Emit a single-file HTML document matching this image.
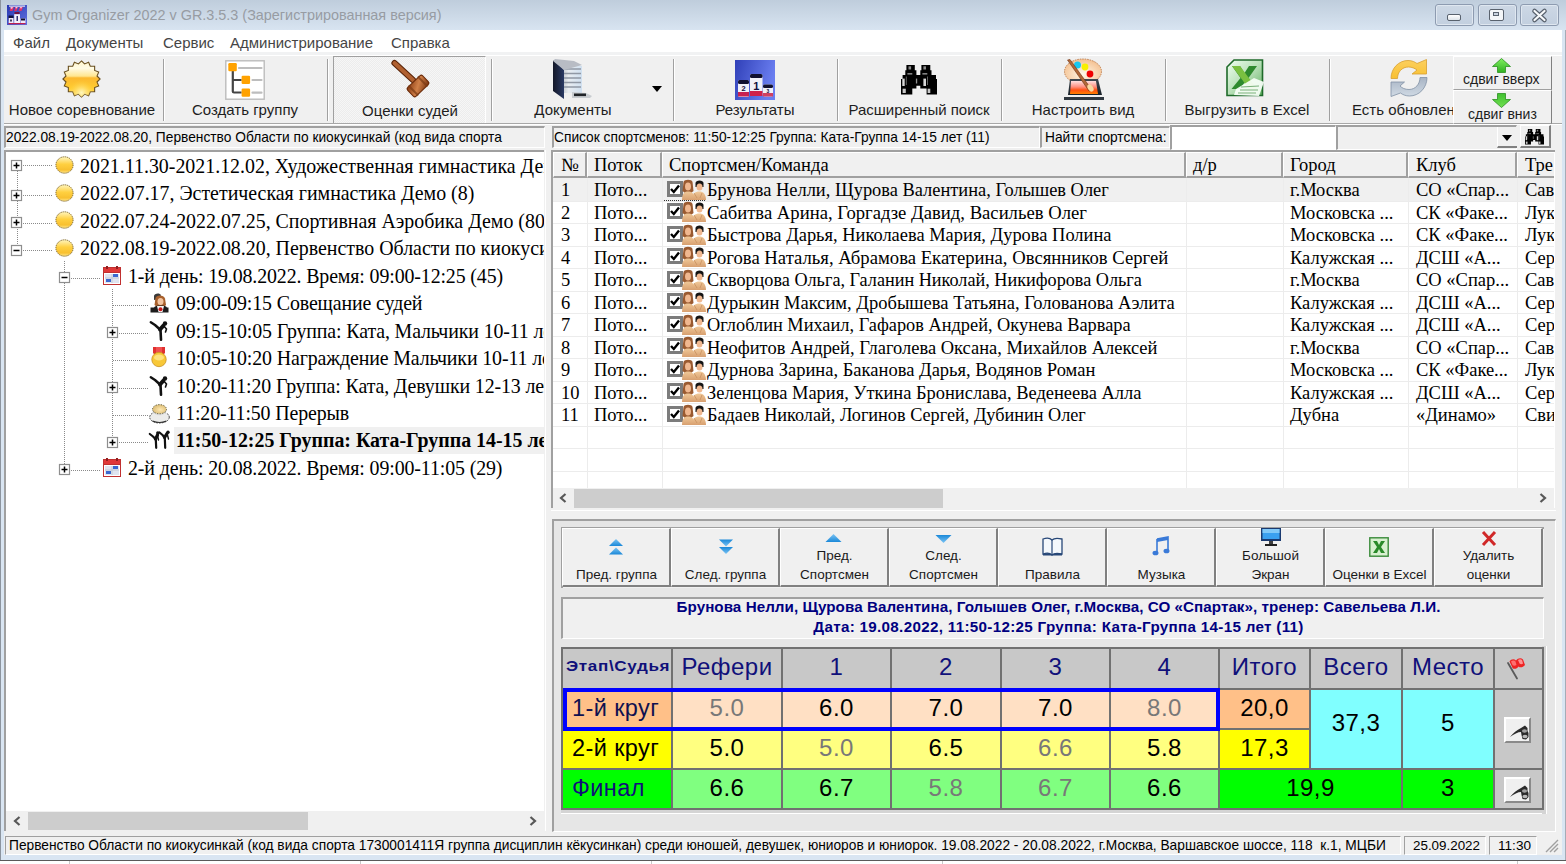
<!DOCTYPE html><html><head><meta charset="utf-8"><style>
html,body{margin:0;padding:0;}
body{width:1566px;height:864px;overflow:hidden;position:relative;background:#fbfbfb;font-family:"Liberation Sans",sans-serif;}
div{position:absolute;box-sizing:border-box;}
.t{white-space:pre;line-height:1;}
svg{position:absolute;overflow:visible;}

</style></head><body>
<div style="left:0px;top:860px;width:1566px;height:4px;background:#ffffff;"></div>
<div style="left:0px;top:860px;width:1566px;height:1px;background:#5a5a5a;"></div>
<div style="left:69px;top:861px;width:1px;height:3px;background:#c8c8c8;"></div>
<div style="left:360px;top:861px;width:1px;height:3px;background:#c8c8c8;"></div>
<div style="left:651px;top:861px;width:1px;height:3px;background:#c8c8c8;"></div>
<div style="left:942px;top:861px;width:1px;height:3px;background:#c8c8c8;"></div>
<div style="left:1517px;top:861px;width:1px;height:3px;background:#c8c8c8;"></div>
<div style="left:0px;top:0px;width:1566px;height:860px;background:#d9e5f2;"></div>
<div style="left:0px;top:0px;width:1px;height:860px;background:#8c949e;"></div>
<div style="left:1565px;top:0px;width:1px;height:860px;background:#a4acb6;"></div>
<div style="left:1px;top:0px;width:1565px;height:30px;background:linear-gradient(#bfcddc,#d8e4f1);"></div>
<svg style="left:6.5px;top:4.7px" width="20" height="20" viewBox="0 0 20 20">
<defs><linearGradient id="aig" x1="0" y1="0" x2="1" y2="1"><stop offset="0" stop-color="#2838b0"/><stop offset="1" stop-color="#6070e0"/></linearGradient></defs>
<rect x="0" y="0" width="20" height="20" fill="url(#aig)"/>
<rect x="2" y="0.5" width="16" height="1.2" fill="#e8e8f8"/>
<path d="M2.5 6 L4 2 H7 L5.5 6 Z M7 6 L8.5 2 H11 L9.5 6 Z M11.5 6 L13 2 H16 L14.5 6 Z" fill="#e0306a"/>
<path d="M3 3 L4 2 H6 L5 4 Z M8 3 L9 2 H10.5 L10 3.5 Z M12.5 3 L13.5 2 H15 L14.5 3.5 Z" fill="#ffc0d8"/>
<rect x="7.5" y="7" width="5" height="2.2" fill="#701040"/>
<rect x="1.5" y="10.5" width="5" height="5" fill="#141440"/>
<rect x="1.7" y="13" width="4.8" height="5" fill="#f0e8f8"/>
<rect x="7.2" y="9.2" width="5.8" height="8.8" fill="#f4f0fa"/>
<rect x="13.5" y="13.5" width="5" height="4.5" fill="#f0e8f8"/><rect x="14" y="13.5" width="4" height="2" fill="#101030"/>
<rect x="9.5" y="11" width="1.5" height="5" fill="#303070"/><rect x="3" y="14.5" width="2" height="2" fill="#404060"/>
<rect x="1.5" y="18" width="17" height="1.2" fill="#c02050"/>
</svg>
<div class="t" style="left:32px;top:8px;font-size:14.4px;color:#979ca3;">Gym Organizer 2022 v GR.3.5.3 (Зарегистрированная версия)</div>
<div style="left:1435px;top:4px;width:39px;height:22px;border:1px solid #8d9bb0;border-radius:3px;background:linear-gradient(#cdd8e5,#c2cfdf);box-shadow:inset 0 0 0 1px #dfe7f0;"><div style="left:11px;top:8.5px;width:14px;height:7px;border:1.5px solid #59626e;border-radius:2px;background:linear-gradient(#ffffff,#dfe4ea);"></div></div>
<div style="left:1478px;top:4px;width:39px;height:22px;border:1px solid #8d9bb0;border-radius:3px;background:linear-gradient(#cdd8e5,#c2cfdf);box-shadow:inset 0 0 0 1px #dfe7f0;"><div style="left:10px;top:3.5px;width:14.5px;height:12px;border:1.5px solid #59626e;border-radius:2px;background:#f4f6f8;"><div style="left:2.5px;top:2.5px;width:6.5px;height:4px;border:1px solid #59626e;background:#c9d3df"></div></div></div>
<div style="left:1520px;top:4px;width:39px;height:22px;border:1px solid #8d9bb0;border-radius:3px;background:linear-gradient(#cdd8e5,#c2cfdf);box-shadow:inset 0 0 0 1px #dfe7f0;"><svg style="left:11px;top:3.5px" width="15" height="13" viewBox="0 0 15 13"><path d="M2.5 2 L12.5 11 M12.5 2 L2.5 11" stroke="#59626e" stroke-width="4.6" stroke-linecap="round"/><path d="M2.5 2 L12.5 11 M12.5 2 L2.5 11" stroke="#f6f8fa" stroke-width="2.2" stroke-linecap="round"/></svg></div>
<div style="left:4px;top:30px;width:1558px;height:825px;background:#f0f0f0;"></div>
<div style="left:4px;top:30px;width:1558px;height:22px;background:#ffffff;"></div>
<div style="left:4px;top:52px;width:1558px;height:3px;background:#f1f2f3;"></div>
<div style="left:4px;top:55px;width:1558px;height:1px;background:#ffffff;"></div>
<div class="t" style="left:13px;top:35px;font-size:15px;color:#454545;">Файл</div>
<div class="t" style="left:66px;top:35px;font-size:15px;color:#454545;">Документы</div>
<div class="t" style="left:163px;top:35px;font-size:15px;color:#454545;">Сервис</div>
<div class="t" style="left:230px;top:35px;font-size:15px;color:#454545;">Администрирование</div>
<div class="t" style="left:391px;top:35px;font-size:15px;color:#454545;">Справка</div>
<div style="left:4px;top:56px;width:1558px;height:68px;background:#f0f0f0;"></div>
<div style="left:4px;top:123px;width:1558px;height:1px;background:#a8a8a8;"></div>
<div style="left:4px;top:124px;width:1558px;height:1px;background:#ffffff;"></div>
<div style="left:163px;top:59px;width:1px;height:62px;background:#a0a0a0;"></div>
<div style="left:164px;top:59px;width:1px;height:62px;background:#ffffff;"></div>
<div style="left:327px;top:59px;width:1px;height:62px;background:#a0a0a0;"></div>
<div style="left:328px;top:59px;width:1px;height:62px;background:#ffffff;"></div>
<div style="left:491px;top:59px;width:1px;height:62px;background:#a0a0a0;"></div>
<div style="left:492px;top:59px;width:1px;height:62px;background:#ffffff;"></div>
<div style="left:673px;top:59px;width:1px;height:62px;background:#a0a0a0;"></div>
<div style="left:674px;top:59px;width:1px;height:62px;background:#ffffff;"></div>
<div style="left:837px;top:59px;width:1px;height:62px;background:#a0a0a0;"></div>
<div style="left:838px;top:59px;width:1px;height:62px;background:#ffffff;"></div>
<div style="left:1001px;top:59px;width:1px;height:62px;background:#a0a0a0;"></div>
<div style="left:1002px;top:59px;width:1px;height:62px;background:#ffffff;"></div>
<div style="left:1165px;top:59px;width:1px;height:62px;background:#a0a0a0;"></div>
<div style="left:1166px;top:59px;width:1px;height:62px;background:#ffffff;"></div>
<div style="left:1329px;top:59px;width:1px;height:62px;background:#a0a0a0;"></div>
<div style="left:1330px;top:59px;width:1px;height:62px;background:#ffffff;"></div>
<div style="left:333px;top:56px;width:153px;height:67px;border-top:1px solid #a0a0a0;border-left:1px solid #a0a0a0;border-right:1px solid #ffffff;background:#f2f2f2;background-image:repeating-conic-gradient(#f6f6f6 0 25%,#ececec 0 50%);background-size:2px 2px;"></div>
<div class="t" style="left:-68px;top:101.5px;width:300px;text-align:center;font-size:15px;color:#1e1e1e;">Новое соревнование</div>
<div class="t" style="left:95px;top:101.5px;width:300px;text-align:center;font-size:15px;color:#1e1e1e;">Создать группу</div>
<div class="t" style="left:260px;top:102.5px;width:300px;text-align:center;font-size:15px;color:#1e1e1e;">Оценки судей</div>
<div class="t" style="left:423px;top:101.5px;width:300px;text-align:center;font-size:15px;color:#1e1e1e;">Документы</div>
<div class="t" style="left:605px;top:101.5px;width:300px;text-align:center;font-size:15px;color:#1e1e1e;">Результаты</div>
<div class="t" style="left:769px;top:101.5px;width:300px;text-align:center;font-size:15px;color:#1e1e1e;">Расширенный поиск</div>
<div class="t" style="left:933px;top:101.5px;width:300px;text-align:center;font-size:15px;color:#1e1e1e;">Настроить вид</div>
<div class="t" style="left:1097px;top:101.5px;width:300px;text-align:center;font-size:15px;color:#1e1e1e;">Выгрузить в Excel</div>
<div class="t" style="left:1352px;top:101.5px;width:101px;overflow:hidden;font-size:15px;color:#1e1e1e;">Есть обновления</div>
<svg style="left:62px;top:60px" width="39" height="38" viewBox="0 0 39 38">
<defs><linearGradient id="sunA" x1="0" y1="0" x2="0" y2="1"><stop offset="0" stop-color="#fff4c8"/><stop offset="0.2" stop-color="#fffbe6"/><stop offset="0.42" stop-color="#ffe690"/><stop offset="0.47" stop-color="#fbb830"/><stop offset="0.75" stop-color="#ffcc30"/><stop offset="1" stop-color="#ffe070"/></linearGradient>
<radialGradient id="sunB" cx="50%" cy="88%" r="35%"><stop offset="0" stop-color="#fff8c0" stop-opacity="1"/><stop offset="1" stop-color="#ffd040" stop-opacity="0"/></radialGradient></defs>
<polygon points="19.50,0.96 22.58,3.97 26.62,2.33 28.28,6.26 32.65,6.24 32.64,10.49 36.68,12.10 35.00,16.01 38.10,19.00 35.00,21.99 36.68,25.90 32.64,27.51 32.65,31.76 28.28,31.74 26.62,35.67 22.58,34.03 19.50,37.04 16.42,34.03 12.38,35.67 10.72,31.74 6.35,31.76 6.36,27.51 2.32,25.90 4.00,21.99 0.90,19.00 4.00,16.01 2.32,12.10 6.36,10.49 6.35,6.24 10.72,6.26 12.38,2.33 16.42,3.97" fill="url(#sunA)" stroke="#6a5020" stroke-width="1.1" stroke-linejoin="miter"/>
<polygon points="19.50,0.96 22.58,3.97 26.62,2.33 28.28,6.26 32.65,6.24 32.64,10.49 36.68,12.10 35.00,16.01 38.10,19.00 35.00,21.99 36.68,25.90 32.64,27.51 32.65,31.76 28.28,31.74 26.62,35.67 22.58,34.03 19.50,37.04 16.42,34.03 12.38,35.67 10.72,31.74 6.35,31.76 6.36,27.51 2.32,25.90 4.00,21.99 0.90,19.00 4.00,16.01 2.32,12.10 6.36,10.49 6.35,6.24 10.72,6.26 12.38,2.33 16.42,3.97" fill="url(#sunB)"/>
</svg>
<svg style="left:225px;top:60px" width="40" height="40" viewBox="0 0 40 40">
<rect x="0.8" y="0.8" width="38.4" height="38.4" fill="#ffffff" stroke="#bcbcbc" stroke-width="1.4"/>
<path d="M7.8 11 V31.5 Q7.8 32.5 9 32.5 H16.6 M7.8 20 H16.6" stroke="#444" stroke-width="2.2" fill="none"/>
<rect x="3.3" y="3" width="8.5" height="8.2" rx="1.2" fill="#ffa200"/>
<rect x="16.6" y="15.7" width="8.5" height="8.3" rx="1.2" fill="#ffa200"/>
<rect x="16.6" y="28.5" width="8.5" height="8.2" rx="1.2" fill="#ffa200"/>
<path d="M14 8 H36.5 M27.5 20 H36.5 M27.5 32.7 H36.5" stroke="#bdbdbd" stroke-width="2.2" stroke-linecap="round"/>
</svg>
<svg style="left:380px;top:56px" width="60" height="46" viewBox="0 0 60 46">
<defs><linearGradient id="hmA" x1="0" y1="0" x2="1" y2="1"><stop offset="0" stop-color="#8a3c14"/><stop offset="0.5" stop-color="#d08048"/><stop offset="1" stop-color="#7a3410"/></linearGradient></defs>
<path d="M14.5 7 L33 24" stroke="#5a2408" stroke-width="6.2" stroke-linecap="round"/>
<path d="M14.5 7 L33 24" stroke="#b06030" stroke-width="4" stroke-linecap="round"/>
<g transform="translate(38,30) rotate(-44)">
<rect x="-11" y="-6.6" width="22" height="13.2" rx="2.6" fill="#6a2a08"/>
<rect x="-10" y="-5.6" width="20" height="11.2" rx="2" fill="url(#hmA)"/>
<rect x="-7.5" y="-7" width="2" height="14" fill="#7a3a14" opacity="0.7"/>
<rect x="5.5" y="-7" width="2" height="14" fill="#7a3a14" opacity="0.7"/>
</g>
</svg>
<svg style="left:550px;top:58px" width="46" height="44" viewBox="0 0 46 44">
<defs><linearGradient id="dcA" x1="0" y1="0" x2="1" y2="0"><stop offset="0" stop-color="#141828"/><stop offset="1" stop-color="#2a3a64"/></linearGradient>
<linearGradient id="dcB" x1="0" y1="0" x2="1" y2="0"><stop offset="0" stop-color="#9aa0a8"/><stop offset="0.5" stop-color="#e8ecf0"/><stop offset="1" stop-color="#d0e0f0"/></linearGradient></defs>
<path d="M5 4 L14 5 L32 8 L32 35 L14 35 Z" fill="url(#dcB)"/>
<path d="M14 11 H31 M14 15.5 H31 M14 20 H31 M14 24.5 H31 M14 29 H31" stroke="#9098a4" stroke-width="1.4"/>
<path d="M3 3 L5 2 L14 12 L14 41 L3 33 Z" fill="url(#dcA)"/>
<path d="M3 3 L5 1 L24 3 L32 7 L14 12 Z" fill="#b8bcc4"/>
<path d="M22 34 L36 35 L42 38 L40 40 L22 40 Z" fill="#c8ccd0"/>
<rect x="24" y="35.5" width="12" height="2.6" fill="#202428"/>
</svg>
<svg style="left:652px;top:86px" width="10" height="6" viewBox="0 0 10 6"><path d="M0 0 H10 L5 6 Z" fill="#000"/></svg>
<svg style="left:735px;top:60px" width="40" height="40" viewBox="0 0 40 40">
<defs><linearGradient id="pg" x1="0" y1="0" x2="1" y2="0.3"><stop offset="0" stop-color="#3040b8"/><stop offset="1" stop-color="#6a7ef0"/></linearGradient></defs>
<rect width="40" height="40" fill="url(#pg)"/>
<rect x="15" y="14" width="12.5" height="22" rx="1.5" fill="#f0f0f8"/><rect x="15" y="14" width="12.5" height="4" rx="1.5" fill="#101030"/>
<rect x="15" y="31" width="12.5" height="5" fill="#d02048"/>
<rect x="3" y="20" width="11" height="17" rx="1.5" fill="#f0f0f8"/><rect x="3" y="20" width="11" height="4" rx="1.5" fill="#101030"/>
<rect x="3" y="32" width="11" height="4.5" fill="#c82050"/>
<rect x="28" y="24.5" width="10" height="12" rx="1.5" fill="#f0f0f8"/><rect x="28" y="24.5" width="10" height="3.5" rx="1.5" fill="#101030"/>
<rect x="28" y="33" width="10" height="3.5" fill="#d04060"/>
<text x="21.2" y="30" text-anchor="middle" font-size="11" font-weight="bold" fill="#101040" font-family="Liberation Sans">1</text>
<text x="8.5" y="31" text-anchor="middle" font-size="7.5" font-weight="bold" fill="#101040" font-family="Liberation Sans">2</text>
<text x="33" y="32.5" text-anchor="middle" font-size="5" font-weight="bold" fill="#101040" font-family="Liberation Sans">3</text>
</svg>
<svg style="left:900.6px;top:64.8px" width="36" height="30" viewBox="0 0 36 30"><path d="M5.4 0 H13.8 V5.3 H15.4 V10 H19.3 V5.3 H20.4 V0 H29.3 V5.3 H30.5 V10 H35 V14 H36 V29.4 H25.6 V23.4 H19.3 V20.7 H15.4 V23.4 H11.3 V29.4 H0 V14 H1.6 V10 H4.3 V5.3 H5.4 Z" fill="#000"/>
<rect x="7.5" y="1.3" width="2.6" height="3.2" fill="#8a8a8a"/><rect x="22.4" y="1.3" width="2.6" height="3.2" fill="#8a8a8a"/>
<rect x="6.4" y="8.2" width="4.9" height="1.3" fill="#a0a0a0"/><rect x="21.4" y="8.2" width="4.9" height="1.3" fill="#a0a0a0"/>
<rect x="1.3" y="13.6" width="2.4" height="7.4" fill="#d8d8d8"/><rect x="1.6" y="23.7" width="3.2" height="4.3" fill="#c8c8c8"/>
<rect x="14.9" y="13.6" width="1.3" height="4.9" fill="#909090"/>
<rect x="22.4" y="13.6" width="2.6" height="7.4" fill="#d8d8d8"/><rect x="26.6" y="23.7" width="2.7" height="4.3" fill="#c8c8c8"/>
<rect x="4.8" y="11.5" width="1" height="8.5" fill="#606060"/><rect x="26" y="11.5" width="1" height="8.5" fill="#606060"/></svg>
<svg style="left:1062px;top:58px" width="42" height="43" viewBox="0 0 42 43">
<defs><radialGradient id="plA" cx="50%" cy="60%" r="60%"><stop offset="0" stop-color="#fff8e8"/><stop offset="1" stop-color="#f4c090"/></radialGradient>
<linearGradient id="plB" x1="0" y1="0" x2="0" y2="1"><stop offset="0" stop-color="#ffe0e0"/><stop offset="0.45" stop-color="#ff9080"/><stop offset="0.7" stop-color="#ff5010"/><stop offset="1" stop-color="#ff8000"/></linearGradient>
<linearGradient id="plC" x1="0" y1="0" x2="0" y2="1"><stop offset="0" stop-color="#404850"/><stop offset="1" stop-color="#182028"/></linearGradient></defs>
<ellipse cx="21" cy="13.5" rx="18.5" ry="12.5" fill="url(#plA)" stroke="#c08050" stroke-width="1" stroke-dasharray="1.5 1"/>
<circle cx="15.5" cy="7" r="3.5" fill="#18c8f0"/><circle cx="23" cy="9" r="3.4" fill="#f8f000"/><circle cx="28" cy="16" r="3.4" fill="#f00000"/>
<path d="M6 37 L8 21 L36 21 L40 37 Z" fill="url(#plC)"/>
<path d="M9 23 L34 23 L36 36 L8 36 Z" fill="url(#plB)"/>
<rect x="2" y="39" width="40" height="3" fill="#303840"/>
<path d="M5.5 2 L8 1.5 L30 32 L27 33 Z" fill="#b06838" stroke="#703010" stroke-width="0.6"/>
<ellipse cx="28.5" cy="30" rx="2.5" ry="4" transform="rotate(-35 28.5 30)" fill="#f8d8a0"/>
</svg>
<svg style="left:1226px;top:59px" width="38" height="38" viewBox="0 0 38 38">
<defs><linearGradient id="xg" x1="0" y1="0" x2="1" y2="1"><stop offset="0" stop-color="#f0fff0"/><stop offset="0.5" stop-color="#b8e0b8"/><stop offset="1" stop-color="#60b060"/></linearGradient></defs>
<path d="M8 1 H36.5 V36.5 H1 V8 Z" fill="url(#xg)" stroke="#1e6a2a" stroke-width="1.6"/>
<path d="M6 7 H14 L18.5 14 L23 7 H31 L22.5 19 L31 30 H23 L18.5 23.5 L14 30 H5.5 L14.5 19 Z" fill="#2e8a2e"/>
<path d="M6 7 H14 L31 30 H23 Z" fill="#7ac040"/>
<path d="M10 30 L28 19 L38 23 L33 37 L8 36 Z" fill="#f8fff8" opacity="0.92"/>
<path d="M15 28 L33 27 M14 31 L32 31 M12 34 L30 34" stroke="#7ab07a" stroke-width="1.2"/>
</svg>
<svg style="left:1390px;top:59px" width="38" height="38" viewBox="0 0 38 38">
<defs><linearGradient id="rfA" x1="0" y1="0" x2="0" y2="1"><stop offset="0" stop-color="#fcd060"/><stop offset="1" stop-color="#f8c030"/></linearGradient>
<linearGradient id="rfB" x1="0" y1="0" x2="0" y2="1"><stop offset="0" stop-color="#a8b4c4"/><stop offset="1" stop-color="#d0dae4"/></linearGradient></defs>
<path d="M1 19.5 C1 9 9 1.5 18 1.5 C22 1.5 25 3 27 4.5 L36.5 0.5 V15 H22 L27 11 C25 9.5 22 8 18.5 8 C12 8 7.5 13 7.5 19.5 Z" fill="url(#rfA)" stroke="#d8a030" stroke-width="0.8"/>
<path d="M37 18.5 C37 29 29 37 19.5 37 C15.5 37 12.5 35.5 10.5 34 L1 37.5 V23 H14.5 L10 27 C12 29 15 30.5 19 30.5 C25.5 30.5 30 25 30 18.5 Z" fill="url(#rfB)" stroke="#8090a4" stroke-width="0.8"/>
</svg>
<div style="left:1453px;top:56px;width:99px;height:34px;border-top:1px solid #ffffff;border-left:1px solid #ffffff;border-right:1px solid #808080;border-bottom:1px solid #a0a0a0;background:#f0f0f0;"></div>
<div style="left:1453px;top:90px;width:99px;height:34px;border-top:1px solid #ffffff;border-left:1px solid #ffffff;border-right:1px solid #808080;border-bottom:1px solid #a0a0a0;background:#f0f0f0;"></div>
<svg style="left:1492px;top:58px" width="19" height="15" viewBox="0 0 19 15"><defs><linearGradient id="gar" x1="0" y1="0" x2="0" y2="1"><stop offset="0" stop-color="#80f060"/><stop offset="1" stop-color="#30b020"/></linearGradient></defs><path d="M9.5 0.5 L18.5 8.5 H13.5 V14.5 H5.5 V8.5 H0.5 Z" fill="url(#gar)" stroke="#2a9020" stroke-width="0.8"/></svg>
<svg style="left:1492px;top:93px" width="19" height="15" viewBox="0 0 19 15"><defs><linearGradient id="gar2" x1="0" y1="0" x2="0" y2="1"><stop offset="0" stop-color="#40c030"/><stop offset="1" stop-color="#70e050"/></linearGradient></defs><path d="M5.5 0.5 H13.5 V6.5 H18.5 L9.5 14.5 L0.5 6.5 H5.5 Z" fill="url(#gar2)" stroke="#2a9020" stroke-width="0.8"/></svg>
<div class="t" style="left:1463px;top:72px;font-size:14px;color:#1e1e1e;">сдвиг вверх</div>
<div class="t" style="left:1468px;top:107px;font-size:14px;color:#1e1e1e;">сдвиг вниз</div>
<div style="left:4px;top:126px;width:541px;height:22px;background:#f0f0f0;border-top:2px solid #a0a0a0;border-left:2px solid #a0a0a0;border-bottom:1px solid #ffffff;border-right:1px solid #ffffff;"></div>
<div class="t" style="left:6px;top:131px;font-size:13.75px;color:#000;">2022.08.19-2022.08.20, Первенство Области по киокусинкай (код вида спорта</div>
<div style="left:552px;top:126px;width:488px;height:22px;background:#f0f0f0;border-top:2px solid #a0a0a0;border-left:2px solid #a0a0a0;border-bottom:1px solid #ffffff;border-right:1px solid #ffffff;"></div>
<div class="t" style="left:554px;top:131px;font-size:13.75px;color:#000;">Список спортсменов: 11:50-12:25 Группа: Ката-Группа 14-15 лет (11)</div>
<div style="left:1040px;top:126px;width:130px;height:22px;background:#f0f0f0;border-top:2px solid #a0a0a0;border-left:2px solid #a0a0a0;border-bottom:1px solid #ffffff;border-right:1px solid #ffffff;"></div>
<div class="t" style="left:1045px;top:131px;font-size:13.75px;color:#000;">Найти спортсмена:</div>
<div style="left:1170px;top:125px;width:166px;height:25px;background:#ffffff;border-top:2px solid #a0a0a0;border-left:2px solid #a0a0a0;border-bottom:1px solid #ffffff;border-right:1px solid #ffffff;"></div>
<div style="left:1336px;top:125px;width:181px;height:25px;background:#f0f0f0;border-top:2px solid #a0a0a0;border-left:2px solid #a0a0a0;border-bottom:1px solid #ffffff;border-right:1px solid #ffffff;"></div>
<div style="left:1497px;top:127px;width:20px;height:21px;background:#f0f0f0;border-left:1px solid #ffffff;border-bottom:2px solid #808080;"></div>
<svg style="left:1502px;top:135px" width="10" height="6" viewBox="0 0 10 6"><path d="M0 0 H10 L5 6 Z" fill="#000"/></svg>
<div style="left:1520px;top:125px;width:31px;height:23px;background:#f0f0f0;border-top:1px solid #ffffff;border-left:1px solid #ffffff;border-right:2px solid #808080;border-bottom:2px solid #808080;"></div>
<svg style="left:1525px;top:129px" width="19" height="16" viewBox="0 0 36 30"><path d="M5.4 0 H13.8 V5.3 H15.4 V10 H19.3 V5.3 H20.4 V0 H29.3 V5.3 H30.5 V10 H35 V14 H36 V29.4 H25.6 V23.4 H19.3 V20.7 H15.4 V23.4 H11.3 V29.4 H0 V14 H1.6 V10 H4.3 V5.3 H5.4 Z" fill="#000"/>
<rect x="7.5" y="1.3" width="2.6" height="3.2" fill="#8a8a8a"/><rect x="22.4" y="1.3" width="2.6" height="3.2" fill="#8a8a8a"/>
<rect x="6.4" y="8.2" width="4.9" height="1.3" fill="#a0a0a0"/><rect x="21.4" y="8.2" width="4.9" height="1.3" fill="#a0a0a0"/>
<rect x="1.3" y="13.6" width="2.4" height="7.4" fill="#d8d8d8"/><rect x="1.6" y="23.7" width="3.2" height="4.3" fill="#c8c8c8"/>
<rect x="14.9" y="13.6" width="1.3" height="4.9" fill="#909090"/>
<rect x="22.4" y="13.6" width="2.6" height="7.4" fill="#d8d8d8"/><rect x="26.6" y="23.7" width="2.7" height="4.3" fill="#c8c8c8"/>
<rect x="4.8" y="11.5" width="1" height="8.5" fill="#606060"/><rect x="26" y="11.5" width="1" height="8.5" fill="#606060"/></svg>
<div style="left:4px;top:831px;width:1558px;height:24px;background:#f0f0f0;"></div>
<div style="left:5px;top:836px;width:1396px;height:19px;border-top:1px solid #a0a0a0;border-left:1px solid #a0a0a0;border-bottom:1px solid #ffffff;border-right:1px solid #ffffff;"></div>
<div style="left:1404px;top:836px;width:82px;height:19px;border-top:1px solid #a0a0a0;border-left:1px solid #a0a0a0;border-bottom:1px solid #ffffff;border-right:1px solid #ffffff;"></div>
<div style="left:1489px;top:836px;width:48px;height:19px;border-top:1px solid #a0a0a0;border-left:1px solid #a0a0a0;border-bottom:1px solid #ffffff;border-right:1px solid #ffffff;"></div>
<div class="t" style="left:9px;top:839px;font-size:13.75px;color:#000;">Первенство Области по киокусинкай (код вида спорта 1730001411Я группа дисциплин кёкусинкан) среди юношей, девушек, юниоров и юниорок. 19.08.2022 - 20.08.2022, г.Москва, Варшавское шоссе, 118  к.1, МЦБИ</div>
<div class="t" style="left:1413px;top:839px;font-size:13.4px;color:#000;">25.09.2022</div>
<div class="t" style="left:1498px;top:839px;font-size:13.6px;color:#000;">11:30</div>
<svg style="left:1545px;top:840px" width="14" height="13" viewBox="0 0 14 13"><path d="M13 0 L1 12 M13 4 L5 12 M13 8 L9 12" stroke="#a0a0a0" stroke-width="1.4"/></svg>
<div style="left:4px;top:150px;width:543px;height:681px;background:#f0f0f0;"></div>
<div style="left:4px;top:150px;width:540px;height:681px;background:#ffffff;border-top:2px solid #a0a0a0;border-left:2px solid #a0a0a0;"></div>
<div style="left:545px;top:150px;width:1px;height:681px;background:#ffffff;"></div>
<div style="left:17px;top:171px;width:1px;height:77px;background-image:repeating-linear-gradient(180deg,#8a8a8a 0 1px,transparent 1px 2px);"></div>
<div style="left:64px;top:261px;width:1px;height:207px;background-image:repeating-linear-gradient(180deg,#8a8a8a 0 1px,transparent 1px 2px);"></div>
<div style="left:112px;top:289px;width:1px;height:151px;background-image:repeating-linear-gradient(180deg,#8a8a8a 0 1px,transparent 1px 2px);"></div>
<div style="left:6px;top:152px;width:538px;height:659px;overflow:hidden;">
<div class="t" style="left:74px;top:5px;font-family:'Liberation Serif', serif;font-size:19.9px;color:#000;">2021.11.30-2021.12.02, Художественная гимнастика Демо (45)</div>
<div class="t" style="left:74px;top:32px;font-family:'Liberation Serif', serif;font-size:19.9px;color:#000;">2022.07.17, Эстетическая гимнастика Демо (8)</div>
<div class="t" style="left:74px;top:60px;font-family:'Liberation Serif', serif;font-size:19.9px;color:#000;">2022.07.24-2022.07.25, Спортивная Аэробика Демо (80)</div>
<div class="t" style="left:74px;top:87px;font-family:'Liberation Serif', serif;font-size:19.9px;color:#000;">2022.08.19-2022.08.20, Первенство Области по киокусинкай (45)</div>
<div class="t" style="left:122px;top:115px;font-family:'Liberation Serif', serif;font-size:19.9px;color:#000;letter-spacing:-0.12px;">1-й день: 19.08.2022. Время: 09:00-12:25 (45)</div>
<div class="t" style="left:170px;top:142px;font-family:'Liberation Serif', serif;font-size:19.9px;color:#000;letter-spacing:-0.12px;">09:00-09:15 Совещание судей</div>
<div class="t" style="left:170px;top:170px;font-family:'Liberation Serif', serif;font-size:19.9px;color:#000;letter-spacing:-0.12px;">09:15-10:05 Группа: Ката, Мальчики 10-11 лет (13)</div>
<div class="t" style="left:170px;top:197px;font-family:'Liberation Serif', serif;font-size:19.9px;color:#000;letter-spacing:-0.12px;">10:05-10:20 Награждение Мальчики 10-11 лет</div>
<div class="t" style="left:170px;top:225px;font-family:'Liberation Serif', serif;font-size:19.9px;color:#000;letter-spacing:-0.12px;">10:20-11:20 Группа: Ката, Девушки 12-13 лет (12)</div>
<div class="t" style="left:170px;top:252px;font-family:'Liberation Serif', serif;font-size:19.9px;color:#000;letter-spacing:-0.12px;">11:20-11:50 Перерыв</div>
<div style="left:168px;top:275px;width:540px;height:27px;background:#f0f0f0;"></div>
<div class="t" style="left:170px;top:280px;font-family:'Liberation Serif', serif;font-size:19.9px;color:#000;letter-spacing:-0.12px;font-weight:bold;font-size:19.9px;letter-spacing:0px;margin-top:-1px;">11:50-12:25 Группа: Ката-Группа 14-15 лет (11)</div>
<div class="t" style="left:122px;top:307px;font-family:'Liberation Serif', serif;font-size:19.9px;color:#000;letter-spacing:-0.12px;">2-й день: 20.08.2022. Время: 09:00-11:05 (29)</div>
</div>
<div style="left:23px;top:164.5px;width:30px;height:1px;background-image:repeating-linear-gradient(90deg,#8a8a8a 0 1px,transparent 1px 2px);"></div>
<svg style="left:11px;top:160px" width="11" height="11" viewBox="0 0 11 11"><rect x="0.5" y="0.5" width="10" height="10" fill="#fff" stroke="#8e8e8e" stroke-width="1.2"/><rect x="2.5" y="4.75" width="6" height="1.5" fill="#000"/><rect x="4.75" y="2.5" width="1.5" height="6" fill="#000"/></svg>
<svg style="left:55px;top:156px" width="19" height="18" viewBox="0 0 19 18">
<defs><linearGradient id="bl0" x1="0" y1="0" x2="0" y2="1"><stop offset="0" stop-color="#fff6c0"/><stop offset="0.45" stop-color="#ffd040"/><stop offset="0.8" stop-color="#f8c030"/><stop offset="1" stop-color="#ffe890"/></linearGradient></defs>
<ellipse cx="9.5" cy="9" rx="8.6" ry="8.2" fill="url(#bl0)" stroke="#7a6020" stroke-width="1" stroke-dasharray="1.2 0.8"/>
</svg>
<div style="left:23px;top:194.5px;width:30px;height:1px;background-image:repeating-linear-gradient(90deg,#8a8a8a 0 1px,transparent 1px 2px);"></div>
<svg style="left:11px;top:190px" width="11" height="11" viewBox="0 0 11 11"><rect x="0.5" y="0.5" width="10" height="10" fill="#fff" stroke="#8e8e8e" stroke-width="1.2"/><rect x="2.5" y="4.75" width="6" height="1.5" fill="#000"/><rect x="4.75" y="2.5" width="1.5" height="6" fill="#000"/></svg>
<svg style="left:55px;top:184px" width="19" height="18" viewBox="0 0 19 18">
<defs><linearGradient id="bl1" x1="0" y1="0" x2="0" y2="1"><stop offset="0" stop-color="#fff6c0"/><stop offset="0.45" stop-color="#ffd040"/><stop offset="0.8" stop-color="#f8c030"/><stop offset="1" stop-color="#ffe890"/></linearGradient></defs>
<ellipse cx="9.5" cy="9" rx="8.6" ry="8.2" fill="url(#bl1)" stroke="#7a6020" stroke-width="1" stroke-dasharray="1.2 0.8"/>
</svg>
<div style="left:23px;top:222.5px;width:30px;height:1px;background-image:repeating-linear-gradient(90deg,#8a8a8a 0 1px,transparent 1px 2px);"></div>
<svg style="left:11px;top:217px" width="11" height="11" viewBox="0 0 11 11"><rect x="0.5" y="0.5" width="10" height="10" fill="#fff" stroke="#8e8e8e" stroke-width="1.2"/><rect x="2.5" y="4.75" width="6" height="1.5" fill="#000"/><rect x="4.75" y="2.5" width="1.5" height="6" fill="#000"/></svg>
<svg style="left:55px;top:211px" width="19" height="18" viewBox="0 0 19 18">
<defs><linearGradient id="bl2" x1="0" y1="0" x2="0" y2="1"><stop offset="0" stop-color="#fff6c0"/><stop offset="0.45" stop-color="#ffd040"/><stop offset="0.8" stop-color="#f8c030"/><stop offset="1" stop-color="#ffe890"/></linearGradient></defs>
<ellipse cx="9.5" cy="9" rx="8.6" ry="8.2" fill="url(#bl2)" stroke="#7a6020" stroke-width="1" stroke-dasharray="1.2 0.8"/>
</svg>
<div style="left:23px;top:249.5px;width:30px;height:1px;background-image:repeating-linear-gradient(90deg,#8a8a8a 0 1px,transparent 1px 2px);"></div>
<svg style="left:11px;top:245px" width="11" height="11" viewBox="0 0 11 11"><rect x="0.5" y="0.5" width="10" height="10" fill="#fff" stroke="#8e8e8e" stroke-width="1.2"/><rect x="2.5" y="4.75" width="6" height="1.5" fill="#000"/></svg>
<svg style="left:55px;top:239px" width="19" height="18" viewBox="0 0 19 18">
<defs><linearGradient id="bl3" x1="0" y1="0" x2="0" y2="1"><stop offset="0" stop-color="#fff6c0"/><stop offset="0.45" stop-color="#ffd040"/><stop offset="0.8" stop-color="#f8c030"/><stop offset="1" stop-color="#ffe890"/></linearGradient></defs>
<ellipse cx="9.5" cy="9" rx="8.6" ry="8.2" fill="url(#bl3)" stroke="#7a6020" stroke-width="1" stroke-dasharray="1.2 0.8"/>
</svg>
<div style="left:71px;top:277.5px;width:30px;height:1px;background-image:repeating-linear-gradient(90deg,#8a8a8a 0 1px,transparent 1px 2px);"></div>
<svg style="left:59px;top:272px" width="11" height="11" viewBox="0 0 11 11"><rect x="0.5" y="0.5" width="10" height="10" fill="#fff" stroke="#8e8e8e" stroke-width="1.2"/><rect x="2.5" y="4.75" width="6" height="1.5" fill="#000"/></svg>
<svg style="left:103px;top:266px" width="18" height="19" viewBox="0 0 18 19">
<rect x="0.5" y="1.5" width="17" height="17" fill="#ffffff" stroke="#c03030"/>
<rect x="0.5" y="1.5" width="17" height="5" fill="#e03838" stroke="#c03030"/>
<rect x="3" y="0" width="2" height="3" fill="#902020"/><rect x="13" y="0" width="2" height="3" fill="#902020"/>
<rect x="2" y="8" width="14" height="9" fill="#dfe4f0"/>
<rect x="10" y="8" width="5" height="3" fill="#3a68d0"/><rect x="3" y="13" width="5" height="3" fill="#3a68d0"/>
<path d="M2 12 H16 M9 8 V17" stroke="#b0b8c8" stroke-width="0.6"/>
</svg>
<div style="left:113px;top:304.5px;width:36px;height:1px;background-image:repeating-linear-gradient(90deg,#8a8a8a 0 1px,transparent 1px 2px);"></div>
<svg style="left:150px;top:293px" width="19" height="20" viewBox="0 0 19 20">
<path d="M4 3 C4 0 10 -0.5 11 2 L9 6 L4 7 Z" fill="#3a3a3a"/>
<path d="M5.5 5 C6 1.5 14 1.5 15 5.5 L16 12 L14 14 H7 L4.5 12 Z" fill="#a8602c"/>
<ellipse cx="10.5" cy="8.5" rx="3" ry="3.6" fill="#f2c4a0"/>
<path d="M0.5 19.5 V14.5 H4 C5 13 7 12.5 10.5 12.5 C14 12.5 16 13 17 14.5 H18.5 V19.5 Z" fill="#1c1c1c"/>
<path d="M7 13 H14 L12.5 19 H8.5 Z" fill="#f4f4f4"/>
<circle cx="10.5" cy="16.2" r="2" fill="#c81818"/>
</svg>
<div style="left:119px;top:332.5px;width:30px;height:1px;background-image:repeating-linear-gradient(90deg,#8a8a8a 0 1px,transparent 1px 2px);"></div>
<svg style="left:107px;top:327px" width="11" height="11" viewBox="0 0 11 11"><rect x="0.5" y="0.5" width="10" height="10" fill="#fff" stroke="#8e8e8e" stroke-width="1.2"/><rect x="2.5" y="4.75" width="6" height="1.5" fill="#000"/><rect x="4.75" y="2.5" width="1.5" height="6" fill="#000"/></svg>
<svg style="left:150px;top:321px" width="18" height="20" viewBox="0 0 18 20">
<g fill="none" stroke="#111" stroke-linecap="round" stroke-linejoin="round">
<path d="M0.8 1.2 L5 4 L10 8.5" stroke-width="2.4"/>
<path d="M10 8.5 L13.5 4.5" stroke-width="4"/>
<path d="M10.5 9 L11 18.8" stroke-width="2.6"/>
<path d="M13.8 5 L16.5 8 L15.5 11" stroke-width="1.6"/>
</g>
<circle cx="15" cy="2.4" r="2.2" fill="#111"/>
</svg>
<div style="left:113px;top:359.5px;width:36px;height:1px;background-image:repeating-linear-gradient(90deg,#8a8a8a 0 1px,transparent 1px 2px);"></div>
<svg style="left:150px;top:347px" width="18" height="20" viewBox="0 0 18 20">
<path d="M3 0 H15 V6 L12 9 H6 L3 6 Z" fill="#e03030"/><rect x="6" y="0" width="6" height="6" fill="#f05050"/>
<circle cx="9" cy="12.5" r="7.2" fill="#f8c838" stroke="#c89020" stroke-width="0.8"/>
<ellipse cx="9" cy="10.5" rx="5" ry="3" fill="#ffe890" opacity="0.8"/>
</svg>
<div style="left:119px;top:387.5px;width:30px;height:1px;background-image:repeating-linear-gradient(90deg,#8a8a8a 0 1px,transparent 1px 2px);"></div>
<svg style="left:107px;top:382px" width="11" height="11" viewBox="0 0 11 11"><rect x="0.5" y="0.5" width="10" height="10" fill="#fff" stroke="#8e8e8e" stroke-width="1.2"/><rect x="2.5" y="4.75" width="6" height="1.5" fill="#000"/><rect x="4.75" y="2.5" width="1.5" height="6" fill="#000"/></svg>
<svg style="left:150px;top:376px" width="18" height="20" viewBox="0 0 18 20">
<g fill="none" stroke="#111" stroke-linecap="round" stroke-linejoin="round">
<path d="M0.8 1.2 L5 4 L10 8.5" stroke-width="2.4"/>
<path d="M10 8.5 L13.5 4.5" stroke-width="4"/>
<path d="M10.5 9 L11 18.8" stroke-width="2.6"/>
<path d="M13.8 5 L16.5 8 L15.5 11" stroke-width="1.6"/>
</g>
<circle cx="15" cy="2.4" r="2.2" fill="#111"/>
</svg>
<div style="left:113px;top:414.5px;width:36px;height:1px;background-image:repeating-linear-gradient(90deg,#8a8a8a 0 1px,transparent 1px 2px);"></div>
<svg style="left:148.5px;top:404px" width="21" height="20" viewBox="0 0 21 20">
<defs><radialGradient id="cfA" cx="55%" cy="55%" r="60%"><stop offset="0" stop-color="#ffe8b0"/><stop offset="1" stop-color="#d8b870"/></radialGradient></defs>
<ellipse cx="10.5" cy="13.2" rx="9.8" ry="5.8" fill="#ececea" stroke="#383838" stroke-width="1" stroke-dasharray="1.6 1.2"/>
<path d="M3.5 6 C3.5 13 17.5 13 17.5 6 Z" fill="#dcdcdc"/>
<ellipse cx="10.5" cy="5.2" rx="7" ry="4.6" fill="url(#cfA)" stroke="#4a4a30" stroke-width="0.9" stroke-dasharray="1.2 1.4"/>
<path d="M3.5 17 Q10.5 20 17.5 17" stroke="#303030" stroke-width="1.2" fill="none"/>
</svg>
<div style="left:119px;top:441.5px;width:30px;height:1px;background-image:repeating-linear-gradient(90deg,#8a8a8a 0 1px,transparent 1px 2px);"></div>
<svg style="left:107px;top:437px" width="11" height="11" viewBox="0 0 11 11"><rect x="0.5" y="0.5" width="10" height="10" fill="#fff" stroke="#8e8e8e" stroke-width="1.2"/><rect x="2.5" y="4.75" width="6" height="1.5" fill="#000"/><rect x="4.75" y="2.5" width="1.5" height="6" fill="#000"/></svg>
<svg style="left:149px;top:431px" width="21" height="18" viewBox="0 0 21 18">
<g fill="none" stroke="#111" stroke-linecap="round" stroke-linejoin="round">
<path d="M0.8 3 L4 5.5 L6.5 8" stroke-width="2.2"/><path d="M6.5 8 L8.5 4" stroke-width="3.2"/><path d="M6.8 8.5 L7.2 16.8" stroke-width="2.2"/><path d="M8.5 4.5 L9.5 9" stroke-width="1.4"/>
<path d="M10.5 1.5 L13.5 4 L15.5 6.5" stroke-width="2.2"/><path d="M15.5 6.5 L18 2.5" stroke-width="3.2"/><path d="M15.8 7 L16.2 16.8" stroke-width="2.2"/><path d="M18.2 3 L19.5 8" stroke-width="1.4"/>
</g>
<circle cx="8.8" cy="2" r="1.7" fill="#111"/><circle cx="19" cy="1.2" r="1.7" fill="#111"/>
</svg>
<div style="left:71px;top:469.5px;width:30px;height:1px;background-image:repeating-linear-gradient(90deg,#8a8a8a 0 1px,transparent 1px 2px);"></div>
<svg style="left:59px;top:464px" width="11" height="11" viewBox="0 0 11 11"><rect x="0.5" y="0.5" width="10" height="10" fill="#fff" stroke="#8e8e8e" stroke-width="1.2"/><rect x="2.5" y="4.75" width="6" height="1.5" fill="#000"/><rect x="4.75" y="2.5" width="1.5" height="6" fill="#000"/></svg>
<svg style="left:103px;top:458px" width="18" height="19" viewBox="0 0 18 19">
<rect x="0.5" y="1.5" width="17" height="17" fill="#ffffff" stroke="#c03030"/>
<rect x="0.5" y="1.5" width="17" height="5" fill="#e03838" stroke="#c03030"/>
<rect x="3" y="0" width="2" height="3" fill="#902020"/><rect x="13" y="0" width="2" height="3" fill="#902020"/>
<rect x="2" y="8" width="14" height="9" fill="#dfe4f0"/>
<rect x="10" y="8" width="5" height="3" fill="#3a68d0"/><rect x="3" y="13" width="5" height="3" fill="#3a68d0"/>
<path d="M2 12 H16 M9 8 V17" stroke="#b0b8c8" stroke-width="0.6"/>
</svg>
<div style="left:6px;top:811px;width:538px;height:20px;background:#f0f0f0;"></div>
<div style="left:28px;top:812px;width:280px;height:18px;background:#cdcdcd;"></div>
<svg style="left:13px;top:816px" width="8" height="10" viewBox="0 0 8 10"><path d="M6.5 1 L2 5 L6.5 9" stroke="#585858" stroke-width="2.2" fill="none"/></svg>
<svg style="left:529px;top:816px" width="8" height="10" viewBox="0 0 8 10"><path d="M1.5 1 L6 5 L1.5 9" stroke="#585858" stroke-width="2.2" fill="none"/></svg>
<div style="left:551px;top:150px;width:1011px;height:359px;background:#f0f0f0;"></div>
<div style="left:551px;top:150px;width:1004px;height:359px;background:#ffffff;border-top:2px solid #a0a0a0;border-left:2px solid #a0a0a0;"></div>
<div style="left:553px;top:152px;width:34px;height:26px;background:#f0f0f0;border-top:1px solid #ffffff;border-left:1px solid #ffffff;border-bottom:2px solid #a0a0a0;border-right:2px solid #a0a0a0;"></div>
<div style="left:587px;top:152px;width:75px;height:26px;background:#f0f0f0;border-top:1px solid #ffffff;border-left:1px solid #ffffff;border-bottom:2px solid #a0a0a0;border-right:2px solid #a0a0a0;"></div>
<div style="left:662px;top:152px;width:524px;height:26px;background:#f0f0f0;border-top:1px solid #ffffff;border-left:1px solid #ffffff;border-bottom:2px solid #a0a0a0;border-right:2px solid #a0a0a0;"></div>
<div style="left:1186px;top:152px;width:97px;height:26px;background:#f0f0f0;border-top:1px solid #ffffff;border-left:1px solid #ffffff;border-bottom:2px solid #a0a0a0;border-right:2px solid #a0a0a0;"></div>
<div style="left:1283px;top:152px;width:125px;height:26px;background:#f0f0f0;border-top:1px solid #ffffff;border-left:1px solid #ffffff;border-bottom:2px solid #a0a0a0;border-right:2px solid #a0a0a0;"></div>
<div style="left:1408px;top:152px;width:109px;height:26px;background:#f0f0f0;border-top:1px solid #ffffff;border-left:1px solid #ffffff;border-bottom:2px solid #a0a0a0;border-right:2px solid #a0a0a0;"></div>
<div style="left:1517px;top:152px;width:37px;height:26px;background:#f0f0f0;border-top:1px solid #ffffff;border-left:1px solid #ffffff;border-bottom:2px solid #a0a0a0;"></div>
<div style="left:553px;top:152px;width:1001px;height:336px;overflow:hidden;">
<div class="t" style="left:8px;top:3.5px;font-family:'Liberation Serif', serif;font-size:18.5px;color:#000;">№</div>
<div class="t" style="left:41px;top:3.5px;font-family:'Liberation Serif', serif;font-size:18.5px;color:#000;">Поток</div>
<div class="t" style="left:116px;top:3.5px;font-family:'Liberation Serif', serif;font-size:18.5px;color:#000;">Спортсмен/Команда</div>
<div class="t" style="left:640px;top:3.5px;font-family:'Liberation Serif', serif;font-size:18.5px;color:#000;">д/р</div>
<div class="t" style="left:737px;top:3.5px;font-family:'Liberation Serif', serif;font-size:18.5px;color:#000;">Город</div>
<div class="t" style="left:863px;top:3.5px;font-family:'Liberation Serif', serif;font-size:18.5px;color:#000;">Клуб</div>
<div class="t" style="left:972px;top:3.5px;font-family:'Liberation Serif', serif;font-size:18.5px;color:#000;">Тре</div>
<div style="left:0px;top:26px;width:1001px;height:23px;background:#f0f0f0;"></div>
<div style="left:0px;top:49px;width:1001px;height:1px;background:#ececec;"></div>
<div style="left:0px;top:71px;width:1001px;height:1px;background:#ececec;"></div>
<div style="left:0px;top:94px;width:1001px;height:1px;background:#ececec;"></div>
<div style="left:0px;top:116px;width:1001px;height:1px;background:#ececec;"></div>
<div style="left:0px;top:139px;width:1001px;height:1px;background:#ececec;"></div>
<div style="left:0px;top:161px;width:1001px;height:1px;background:#ececec;"></div>
<div style="left:0px;top:184px;width:1001px;height:1px;background:#ececec;"></div>
<div style="left:0px;top:206px;width:1001px;height:1px;background:#ececec;"></div>
<div style="left:0px;top:229px;width:1001px;height:1px;background:#ececec;"></div>
<div style="left:0px;top:251px;width:1001px;height:1px;background:#ececec;"></div>
<div style="left:0px;top:274px;width:1001px;height:1px;background:#ececec;"></div>
<div style="left:0px;top:296px;width:1001px;height:1px;background:#ececec;"></div>
<div style="left:0px;top:319px;width:1001px;height:1px;background:#ececec;"></div>
<div style="left:0px;top:341px;width:1001px;height:1px;background:#ececec;"></div>
<div style="left:34px;top:26px;width:1px;height:320px;background:#ececec;"></div>
<div style="left:109px;top:26px;width:1px;height:320px;background:#ececec;"></div>
<div style="left:633px;top:26px;width:1px;height:320px;background:#ececec;"></div>
<div style="left:730px;top:26px;width:1px;height:320px;background:#ececec;"></div>
<div style="left:855px;top:26px;width:1px;height:320px;background:#ececec;"></div>
<div style="left:964px;top:26px;width:1px;height:320px;background:#ececec;"></div>
<div class="t" style="left:8px;top:29.0px;font-family:'Liberation Serif', serif;font-size:18.5px;color:#000;">1</div>
<div class="t" style="left:41px;top:29.0px;font-family:'Liberation Serif', serif;font-size:18.5px;color:#000;">Пото...</div>
<div class="t" style="left:154px;top:29.0px;font-family:'Liberation Serif', serif;font-size:18.41px;color:#000;">Брунова Нелли, Щурова Валентина, Голышев Олег</div>
<div class="t" style="left:737px;top:29.0px;font-family:'Liberation Serif', serif;font-size:18.5px;color:#000;">г.Москва</div>
<div class="t" style="left:863px;top:29.0px;font-family:'Liberation Serif', serif;font-size:18.5px;color:#000;">СО «Спар...</div>
<div class="t" style="left:972px;top:29.0px;font-family:'Liberation Serif', serif;font-size:18.5px;color:#000;">Сав</div>
<div style="left:114px;top:29px;width:16px;height:16px;border:3px solid #7c7c7c;background:#fff;"><svg style="left:0px;top:0px" width="10" height="10" viewBox="0 0 10 10"><path d="M1 5 L3.8 8 L9 1.5" stroke="#000" stroke-width="2.4" fill="none"/></svg></div>
<svg style="left:129px;top:26.5px" width="24" height="21" viewBox="0 0 24 21">
<defs><linearGradient id="pplA" x1="0" y1="0" x2="0" y2="1"><stop offset="0" stop-color="#f0c898"/><stop offset="1" stop-color="#d8a070"/></linearGradient></defs>
<path d="M1.5 3 C2 0 10 0 10.5 3 L11.5 12 L9 14 H3 L0.5 12 Z" fill="#9a5a30"/>
<ellipse cx="6" cy="7.5" rx="3" ry="4" fill="#f0b890"/>
<path d="M0 21 C0 14 3 12.5 6 12.5 C9 12.5 13 14 13 21 Z" fill="url(#pplA)"/>
<path d="M13.5 4 C13.5 0.5 21.5 0.5 21.5 4 L21.5 8 H13.5 Z" fill="#141414"/>
<ellipse cx="17.5" cy="8" rx="3" ry="3.6" fill="#f0b890"/>
<path d="M10 21 C10 15 13 12.5 17.5 12.5 C21 12.5 24 15 24 21 Z" fill="url(#pplA)"/>
<path d="M12 14 L15 19 M20 14 L18 19" stroke="#c89060" stroke-width="0.8"/>
</svg>
<div class="t" style="left:8px;top:51.5px;font-family:'Liberation Serif', serif;font-size:18.5px;color:#000;">2</div>
<div class="t" style="left:41px;top:51.5px;font-family:'Liberation Serif', serif;font-size:18.5px;color:#000;">Пото...</div>
<div class="t" style="left:154px;top:51.5px;font-family:'Liberation Serif', serif;font-size:18.67px;color:#000;">Сабитва Арина, Горгадзе Давид, Васильев Олег</div>
<div class="t" style="left:737px;top:51.5px;font-family:'Liberation Serif', serif;font-size:18.5px;color:#000;">Московска ...</div>
<div class="t" style="left:863px;top:51.5px;font-family:'Liberation Serif', serif;font-size:18.5px;color:#000;">СК «Факе...</div>
<div class="t" style="left:972px;top:51.5px;font-family:'Liberation Serif', serif;font-size:18.5px;color:#000;">Лук</div>
<div style="left:114px;top:51px;width:16px;height:16px;border:3px solid #7c7c7c;background:#fff;"><svg style="left:0px;top:0px" width="10" height="10" viewBox="0 0 10 10"><path d="M1 5 L3.8 8 L9 1.5" stroke="#000" stroke-width="2.4" fill="none"/></svg></div>
<svg style="left:129px;top:48.5px" width="24" height="21" viewBox="0 0 24 21">
<defs><linearGradient id="pplA" x1="0" y1="0" x2="0" y2="1"><stop offset="0" stop-color="#f0c898"/><stop offset="1" stop-color="#d8a070"/></linearGradient></defs>
<path d="M1.5 3 C2 0 10 0 10.5 3 L11.5 12 L9 14 H3 L0.5 12 Z" fill="#9a5a30"/>
<ellipse cx="6" cy="7.5" rx="3" ry="4" fill="#f0b890"/>
<path d="M0 21 C0 14 3 12.5 6 12.5 C9 12.5 13 14 13 21 Z" fill="url(#pplA)"/>
<path d="M13.5 4 C13.5 0.5 21.5 0.5 21.5 4 L21.5 8 H13.5 Z" fill="#141414"/>
<ellipse cx="17.5" cy="8" rx="3" ry="3.6" fill="#f0b890"/>
<path d="M10 21 C10 15 13 12.5 17.5 12.5 C21 12.5 24 15 24 21 Z" fill="url(#pplA)"/>
<path d="M12 14 L15 19 M20 14 L18 19" stroke="#c89060" stroke-width="0.8"/>
</svg>
<div class="t" style="left:8px;top:74.0px;font-family:'Liberation Serif', serif;font-size:18.5px;color:#000;">3</div>
<div class="t" style="left:41px;top:74.0px;font-family:'Liberation Serif', serif;font-size:18.5px;color:#000;">Пото...</div>
<div class="t" style="left:154px;top:74.0px;font-family:'Liberation Serif', serif;font-size:18.46px;color:#000;">Быстрова Дарья, Николаева Мария, Дурова Полина</div>
<div class="t" style="left:737px;top:74.0px;font-family:'Liberation Serif', serif;font-size:18.5px;color:#000;">Московска ...</div>
<div class="t" style="left:863px;top:74.0px;font-family:'Liberation Serif', serif;font-size:18.5px;color:#000;">СК «Факе...</div>
<div class="t" style="left:972px;top:74.0px;font-family:'Liberation Serif', serif;font-size:18.5px;color:#000;">Лук</div>
<div style="left:114px;top:74px;width:16px;height:16px;border:3px solid #7c7c7c;background:#fff;"><svg style="left:0px;top:0px" width="10" height="10" viewBox="0 0 10 10"><path d="M1 5 L3.8 8 L9 1.5" stroke="#000" stroke-width="2.4" fill="none"/></svg></div>
<svg style="left:129px;top:71.5px" width="24" height="21" viewBox="0 0 24 21">
<defs><linearGradient id="pplA" x1="0" y1="0" x2="0" y2="1"><stop offset="0" stop-color="#f0c898"/><stop offset="1" stop-color="#d8a070"/></linearGradient></defs>
<path d="M1.5 3 C2 0 10 0 10.5 3 L11.5 12 L9 14 H3 L0.5 12 Z" fill="#9a5a30"/>
<ellipse cx="6" cy="7.5" rx="3" ry="4" fill="#f0b890"/>
<path d="M0 21 C0 14 3 12.5 6 12.5 C9 12.5 13 14 13 21 Z" fill="url(#pplA)"/>
<path d="M13.5 4 C13.5 0.5 21.5 0.5 21.5 4 L21.5 8 H13.5 Z" fill="#141414"/>
<ellipse cx="17.5" cy="8" rx="3" ry="3.6" fill="#f0b890"/>
<path d="M10 21 C10 15 13 12.5 17.5 12.5 C21 12.5 24 15 24 21 Z" fill="url(#pplA)"/>
<path d="M12 14 L15 19 M20 14 L18 19" stroke="#c89060" stroke-width="0.8"/>
</svg>
<div class="t" style="left:8px;top:96.5px;font-family:'Liberation Serif', serif;font-size:18.5px;color:#000;">4</div>
<div class="t" style="left:41px;top:96.5px;font-family:'Liberation Serif', serif;font-size:18.5px;color:#000;">Пото...</div>
<div class="t" style="left:154px;top:96.5px;font-family:'Liberation Serif', serif;font-size:18.70px;color:#000;">Рогова Наталья, Абрамова Екатерина, Овсянников Сергей</div>
<div class="t" style="left:737px;top:96.5px;font-family:'Liberation Serif', serif;font-size:18.5px;color:#000;">Калужская ...</div>
<div class="t" style="left:863px;top:96.5px;font-family:'Liberation Serif', serif;font-size:18.5px;color:#000;">ДСШ «А...</div>
<div class="t" style="left:972px;top:96.5px;font-family:'Liberation Serif', serif;font-size:18.5px;color:#000;">Сер</div>
<div style="left:114px;top:96px;width:16px;height:16px;border:3px solid #7c7c7c;background:#fff;"><svg style="left:0px;top:0px" width="10" height="10" viewBox="0 0 10 10"><path d="M1 5 L3.8 8 L9 1.5" stroke="#000" stroke-width="2.4" fill="none"/></svg></div>
<svg style="left:129px;top:93.5px" width="24" height="21" viewBox="0 0 24 21">
<defs><linearGradient id="pplA" x1="0" y1="0" x2="0" y2="1"><stop offset="0" stop-color="#f0c898"/><stop offset="1" stop-color="#d8a070"/></linearGradient></defs>
<path d="M1.5 3 C2 0 10 0 10.5 3 L11.5 12 L9 14 H3 L0.5 12 Z" fill="#9a5a30"/>
<ellipse cx="6" cy="7.5" rx="3" ry="4" fill="#f0b890"/>
<path d="M0 21 C0 14 3 12.5 6 12.5 C9 12.5 13 14 13 21 Z" fill="url(#pplA)"/>
<path d="M13.5 4 C13.5 0.5 21.5 0.5 21.5 4 L21.5 8 H13.5 Z" fill="#141414"/>
<ellipse cx="17.5" cy="8" rx="3" ry="3.6" fill="#f0b890"/>
<path d="M10 21 C10 15 13 12.5 17.5 12.5 C21 12.5 24 15 24 21 Z" fill="url(#pplA)"/>
<path d="M12 14 L15 19 M20 14 L18 19" stroke="#c89060" stroke-width="0.8"/>
</svg>
<div class="t" style="left:8px;top:119.0px;font-family:'Liberation Serif', serif;font-size:18.5px;color:#000;">5</div>
<div class="t" style="left:41px;top:119.0px;font-family:'Liberation Serif', serif;font-size:18.5px;color:#000;">Пото...</div>
<div class="t" style="left:154px;top:119.0px;font-family:'Liberation Serif', serif;font-size:18.19px;color:#000;">Скворцова Ольга, Галанин Николай, Никифорова Ольга</div>
<div class="t" style="left:737px;top:119.0px;font-family:'Liberation Serif', serif;font-size:18.5px;color:#000;">г.Москва</div>
<div class="t" style="left:863px;top:119.0px;font-family:'Liberation Serif', serif;font-size:18.5px;color:#000;">СО «Спар...</div>
<div class="t" style="left:972px;top:119.0px;font-family:'Liberation Serif', serif;font-size:18.5px;color:#000;">Сав</div>
<div style="left:114px;top:119px;width:16px;height:16px;border:3px solid #7c7c7c;background:#fff;"><svg style="left:0px;top:0px" width="10" height="10" viewBox="0 0 10 10"><path d="M1 5 L3.8 8 L9 1.5" stroke="#000" stroke-width="2.4" fill="none"/></svg></div>
<svg style="left:129px;top:116.5px" width="24" height="21" viewBox="0 0 24 21">
<defs><linearGradient id="pplA" x1="0" y1="0" x2="0" y2="1"><stop offset="0" stop-color="#f0c898"/><stop offset="1" stop-color="#d8a070"/></linearGradient></defs>
<path d="M1.5 3 C2 0 10 0 10.5 3 L11.5 12 L9 14 H3 L0.5 12 Z" fill="#9a5a30"/>
<ellipse cx="6" cy="7.5" rx="3" ry="4" fill="#f0b890"/>
<path d="M0 21 C0 14 3 12.5 6 12.5 C9 12.5 13 14 13 21 Z" fill="url(#pplA)"/>
<path d="M13.5 4 C13.5 0.5 21.5 0.5 21.5 4 L21.5 8 H13.5 Z" fill="#141414"/>
<ellipse cx="17.5" cy="8" rx="3" ry="3.6" fill="#f0b890"/>
<path d="M10 21 C10 15 13 12.5 17.5 12.5 C21 12.5 24 15 24 21 Z" fill="url(#pplA)"/>
<path d="M12 14 L15 19 M20 14 L18 19" stroke="#c89060" stroke-width="0.8"/>
</svg>
<div class="t" style="left:8px;top:141.5px;font-family:'Liberation Serif', serif;font-size:18.5px;color:#000;">6</div>
<div class="t" style="left:41px;top:141.5px;font-family:'Liberation Serif', serif;font-size:18.5px;color:#000;">Пото...</div>
<div class="t" style="left:154px;top:141.5px;font-family:'Liberation Serif', serif;font-size:18.52px;color:#000;">Дурыкин Максим, Дробышева Татьяна, Голованова Аэлита</div>
<div class="t" style="left:737px;top:141.5px;font-family:'Liberation Serif', serif;font-size:18.5px;color:#000;">Калужская ...</div>
<div class="t" style="left:863px;top:141.5px;font-family:'Liberation Serif', serif;font-size:18.5px;color:#000;">ДСШ «А...</div>
<div class="t" style="left:972px;top:141.5px;font-family:'Liberation Serif', serif;font-size:18.5px;color:#000;">Сер</div>
<div style="left:114px;top:141px;width:16px;height:16px;border:3px solid #7c7c7c;background:#fff;"><svg style="left:0px;top:0px" width="10" height="10" viewBox="0 0 10 10"><path d="M1 5 L3.8 8 L9 1.5" stroke="#000" stroke-width="2.4" fill="none"/></svg></div>
<svg style="left:129px;top:138.5px" width="24" height="21" viewBox="0 0 24 21">
<defs><linearGradient id="pplA" x1="0" y1="0" x2="0" y2="1"><stop offset="0" stop-color="#f0c898"/><stop offset="1" stop-color="#d8a070"/></linearGradient></defs>
<path d="M1.5 3 C2 0 10 0 10.5 3 L11.5 12 L9 14 H3 L0.5 12 Z" fill="#9a5a30"/>
<ellipse cx="6" cy="7.5" rx="3" ry="4" fill="#f0b890"/>
<path d="M0 21 C0 14 3 12.5 6 12.5 C9 12.5 13 14 13 21 Z" fill="url(#pplA)"/>
<path d="M13.5 4 C13.5 0.5 21.5 0.5 21.5 4 L21.5 8 H13.5 Z" fill="#141414"/>
<ellipse cx="17.5" cy="8" rx="3" ry="3.6" fill="#f0b890"/>
<path d="M10 21 C10 15 13 12.5 17.5 12.5 C21 12.5 24 15 24 21 Z" fill="url(#pplA)"/>
<path d="M12 14 L15 19 M20 14 L18 19" stroke="#c89060" stroke-width="0.8"/>
</svg>
<div class="t" style="left:8px;top:164.0px;font-family:'Liberation Serif', serif;font-size:18.5px;color:#000;">7</div>
<div class="t" style="left:41px;top:164.0px;font-family:'Liberation Serif', serif;font-size:18.5px;color:#000;">Пото...</div>
<div class="t" style="left:154px;top:164.0px;font-family:'Liberation Serif', serif;font-size:18.34px;color:#000;">Оглоблин Михаил, Гафаров Андрей, Окунева Варвара</div>
<div class="t" style="left:737px;top:164.0px;font-family:'Liberation Serif', serif;font-size:18.5px;color:#000;">Калужская ...</div>
<div class="t" style="left:863px;top:164.0px;font-family:'Liberation Serif', serif;font-size:18.5px;color:#000;">ДСШ «А...</div>
<div class="t" style="left:972px;top:164.0px;font-family:'Liberation Serif', serif;font-size:18.5px;color:#000;">Сер</div>
<div style="left:114px;top:164px;width:16px;height:16px;border:3px solid #7c7c7c;background:#fff;"><svg style="left:0px;top:0px" width="10" height="10" viewBox="0 0 10 10"><path d="M1 5 L3.8 8 L9 1.5" stroke="#000" stroke-width="2.4" fill="none"/></svg></div>
<svg style="left:129px;top:161.5px" width="24" height="21" viewBox="0 0 24 21">
<defs><linearGradient id="pplA" x1="0" y1="0" x2="0" y2="1"><stop offset="0" stop-color="#f0c898"/><stop offset="1" stop-color="#d8a070"/></linearGradient></defs>
<path d="M1.5 3 C2 0 10 0 10.5 3 L11.5 12 L9 14 H3 L0.5 12 Z" fill="#9a5a30"/>
<ellipse cx="6" cy="7.5" rx="3" ry="4" fill="#f0b890"/>
<path d="M0 21 C0 14 3 12.5 6 12.5 C9 12.5 13 14 13 21 Z" fill="url(#pplA)"/>
<path d="M13.5 4 C13.5 0.5 21.5 0.5 21.5 4 L21.5 8 H13.5 Z" fill="#141414"/>
<ellipse cx="17.5" cy="8" rx="3" ry="3.6" fill="#f0b890"/>
<path d="M10 21 C10 15 13 12.5 17.5 12.5 C21 12.5 24 15 24 21 Z" fill="url(#pplA)"/>
<path d="M12 14 L15 19 M20 14 L18 19" stroke="#c89060" stroke-width="0.8"/>
</svg>
<div class="t" style="left:8px;top:186.5px;font-family:'Liberation Serif', serif;font-size:18.5px;color:#000;">8</div>
<div class="t" style="left:41px;top:186.5px;font-family:'Liberation Serif', serif;font-size:18.5px;color:#000;">Пото...</div>
<div class="t" style="left:154px;top:186.5px;font-family:'Liberation Serif', serif;font-size:18.48px;color:#000;">Неофитов Андрей, Глаголева Оксана, Михайлов Алексей</div>
<div class="t" style="left:737px;top:186.5px;font-family:'Liberation Serif', serif;font-size:18.5px;color:#000;">г.Москва</div>
<div class="t" style="left:863px;top:186.5px;font-family:'Liberation Serif', serif;font-size:18.5px;color:#000;">СО «Спар...</div>
<div class="t" style="left:972px;top:186.5px;font-family:'Liberation Serif', serif;font-size:18.5px;color:#000;">Сав</div>
<div style="left:114px;top:186px;width:16px;height:16px;border:3px solid #7c7c7c;background:#fff;"><svg style="left:0px;top:0px" width="10" height="10" viewBox="0 0 10 10"><path d="M1 5 L3.8 8 L9 1.5" stroke="#000" stroke-width="2.4" fill="none"/></svg></div>
<svg style="left:129px;top:183.5px" width="24" height="21" viewBox="0 0 24 21">
<defs><linearGradient id="pplA" x1="0" y1="0" x2="0" y2="1"><stop offset="0" stop-color="#f0c898"/><stop offset="1" stop-color="#d8a070"/></linearGradient></defs>
<path d="M1.5 3 C2 0 10 0 10.5 3 L11.5 12 L9 14 H3 L0.5 12 Z" fill="#9a5a30"/>
<ellipse cx="6" cy="7.5" rx="3" ry="4" fill="#f0b890"/>
<path d="M0 21 C0 14 3 12.5 6 12.5 C9 12.5 13 14 13 21 Z" fill="url(#pplA)"/>
<path d="M13.5 4 C13.5 0.5 21.5 0.5 21.5 4 L21.5 8 H13.5 Z" fill="#141414"/>
<ellipse cx="17.5" cy="8" rx="3" ry="3.6" fill="#f0b890"/>
<path d="M10 21 C10 15 13 12.5 17.5 12.5 C21 12.5 24 15 24 21 Z" fill="url(#pplA)"/>
<path d="M12 14 L15 19 M20 14 L18 19" stroke="#c89060" stroke-width="0.8"/>
</svg>
<div class="t" style="left:8px;top:209.0px;font-family:'Liberation Serif', serif;font-size:18.5px;color:#000;">9</div>
<div class="t" style="left:41px;top:209.0px;font-family:'Liberation Serif', serif;font-size:18.5px;color:#000;">Пото...</div>
<div class="t" style="left:154px;top:209.0px;font-family:'Liberation Serif', serif;font-size:18.52px;color:#000;">Дурнова Зарина, Баканова Дарья, Водянов Роман</div>
<div class="t" style="left:737px;top:209.0px;font-family:'Liberation Serif', serif;font-size:18.5px;color:#000;">Московска ...</div>
<div class="t" style="left:863px;top:209.0px;font-family:'Liberation Serif', serif;font-size:18.5px;color:#000;">СК «Факе...</div>
<div class="t" style="left:972px;top:209.0px;font-family:'Liberation Serif', serif;font-size:18.5px;color:#000;">Лук</div>
<div style="left:114px;top:209px;width:16px;height:16px;border:3px solid #7c7c7c;background:#fff;"><svg style="left:0px;top:0px" width="10" height="10" viewBox="0 0 10 10"><path d="M1 5 L3.8 8 L9 1.5" stroke="#000" stroke-width="2.4" fill="none"/></svg></div>
<svg style="left:129px;top:206.5px" width="24" height="21" viewBox="0 0 24 21">
<defs><linearGradient id="pplA" x1="0" y1="0" x2="0" y2="1"><stop offset="0" stop-color="#f0c898"/><stop offset="1" stop-color="#d8a070"/></linearGradient></defs>
<path d="M1.5 3 C2 0 10 0 10.5 3 L11.5 12 L9 14 H3 L0.5 12 Z" fill="#9a5a30"/>
<ellipse cx="6" cy="7.5" rx="3" ry="4" fill="#f0b890"/>
<path d="M0 21 C0 14 3 12.5 6 12.5 C9 12.5 13 14 13 21 Z" fill="url(#pplA)"/>
<path d="M13.5 4 C13.5 0.5 21.5 0.5 21.5 4 L21.5 8 H13.5 Z" fill="#141414"/>
<ellipse cx="17.5" cy="8" rx="3" ry="3.6" fill="#f0b890"/>
<path d="M10 21 C10 15 13 12.5 17.5 12.5 C21 12.5 24 15 24 21 Z" fill="url(#pplA)"/>
<path d="M12 14 L15 19 M20 14 L18 19" stroke="#c89060" stroke-width="0.8"/>
</svg>
<div class="t" style="left:8px;top:231.5px;font-family:'Liberation Serif', serif;font-size:18.5px;color:#000;">10</div>
<div class="t" style="left:41px;top:231.5px;font-family:'Liberation Serif', serif;font-size:18.5px;color:#000;">Пото...</div>
<div class="t" style="left:154px;top:231.5px;font-family:'Liberation Serif', serif;font-size:18.46px;color:#000;">Зеленцова Мария, Уткина Бронислава, Веденеева Алла</div>
<div class="t" style="left:737px;top:231.5px;font-family:'Liberation Serif', serif;font-size:18.5px;color:#000;">Калужская ...</div>
<div class="t" style="left:863px;top:231.5px;font-family:'Liberation Serif', serif;font-size:18.5px;color:#000;">ДСШ «А...</div>
<div class="t" style="left:972px;top:231.5px;font-family:'Liberation Serif', serif;font-size:18.5px;color:#000;">Сер</div>
<div style="left:114px;top:231px;width:16px;height:16px;border:3px solid #7c7c7c;background:#fff;"><svg style="left:0px;top:0px" width="10" height="10" viewBox="0 0 10 10"><path d="M1 5 L3.8 8 L9 1.5" stroke="#000" stroke-width="2.4" fill="none"/></svg></div>
<svg style="left:129px;top:228.5px" width="24" height="21" viewBox="0 0 24 21">
<defs><linearGradient id="pplA" x1="0" y1="0" x2="0" y2="1"><stop offset="0" stop-color="#f0c898"/><stop offset="1" stop-color="#d8a070"/></linearGradient></defs>
<path d="M1.5 3 C2 0 10 0 10.5 3 L11.5 12 L9 14 H3 L0.5 12 Z" fill="#9a5a30"/>
<ellipse cx="6" cy="7.5" rx="3" ry="4" fill="#f0b890"/>
<path d="M0 21 C0 14 3 12.5 6 12.5 C9 12.5 13 14 13 21 Z" fill="url(#pplA)"/>
<path d="M13.5 4 C13.5 0.5 21.5 0.5 21.5 4 L21.5 8 H13.5 Z" fill="#141414"/>
<ellipse cx="17.5" cy="8" rx="3" ry="3.6" fill="#f0b890"/>
<path d="M10 21 C10 15 13 12.5 17.5 12.5 C21 12.5 24 15 24 21 Z" fill="url(#pplA)"/>
<path d="M12 14 L15 19 M20 14 L18 19" stroke="#c89060" stroke-width="0.8"/>
</svg>
<div class="t" style="left:8px;top:254.0px;font-family:'Liberation Serif', serif;font-size:18.5px;color:#000;">11</div>
<div class="t" style="left:41px;top:254.0px;font-family:'Liberation Serif', serif;font-size:18.5px;color:#000;">Пото...</div>
<div class="t" style="left:154px;top:254.0px;font-family:'Liberation Serif', serif;font-size:18.23px;color:#000;">Бадаев Николай, Логинов Сергей, Дубинин Олег</div>
<div class="t" style="left:737px;top:254.0px;font-family:'Liberation Serif', serif;font-size:18.5px;color:#000;">Дубна</div>
<div class="t" style="left:863px;top:254.0px;font-family:'Liberation Serif', serif;font-size:18.5px;color:#000;">«Динамо»</div>
<div class="t" style="left:972px;top:254.0px;font-family:'Liberation Serif', serif;font-size:18.5px;color:#000;">Сви</div>
<div style="left:114px;top:254px;width:16px;height:16px;border:3px solid #7c7c7c;background:#fff;"><svg style="left:0px;top:0px" width="10" height="10" viewBox="0 0 10 10"><path d="M1 5 L3.8 8 L9 1.5" stroke="#000" stroke-width="2.4" fill="none"/></svg></div>
<svg style="left:129px;top:251.5px" width="24" height="21" viewBox="0 0 24 21">
<defs><linearGradient id="pplA" x1="0" y1="0" x2="0" y2="1"><stop offset="0" stop-color="#f0c898"/><stop offset="1" stop-color="#d8a070"/></linearGradient></defs>
<path d="M1.5 3 C2 0 10 0 10.5 3 L11.5 12 L9 14 H3 L0.5 12 Z" fill="#9a5a30"/>
<ellipse cx="6" cy="7.5" rx="3" ry="4" fill="#f0b890"/>
<path d="M0 21 C0 14 3 12.5 6 12.5 C9 12.5 13 14 13 21 Z" fill="url(#pplA)"/>
<path d="M13.5 4 C13.5 0.5 21.5 0.5 21.5 4 L21.5 8 H13.5 Z" fill="#141414"/>
<ellipse cx="17.5" cy="8" rx="3" ry="3.6" fill="#f0b890"/>
<path d="M10 21 C10 15 13 12.5 17.5 12.5 C21 12.5 24 15 24 21 Z" fill="url(#pplA)"/>
<path d="M12 14 L15 19 M20 14 L18 19" stroke="#c89060" stroke-width="0.8"/>
</svg>
<div style="left:111px;top:47.80000000000001px;width:42px;height:1px;background-image:repeating-linear-gradient(90deg,#303030 0 1px,transparent 1px 2px);"></div>
</div>
<div style="left:553px;top:488px;width:1001px;height:21px;background:#f0f0f0;"></div>
<div style="left:574px;top:489px;width:369px;height:19px;background:#cdcdcd;"></div>
<svg style="left:559px;top:493px" width="8" height="10" viewBox="0 0 8 10"><path d="M6.5 1 L2 5 L6.5 9" stroke="#585858" stroke-width="2.2" fill="none"/></svg>
<svg style="left:1539px;top:493px" width="8" height="10" viewBox="0 0 8 10"><path d="M1.5 1 L6 5 L1.5 9" stroke="#585858" stroke-width="2.2" fill="none"/></svg>
<div style="left:551px;top:508px;width:1011px;height:323px;background:#f0f0f0;"></div>
<div style="left:551px;top:510px;width:1005px;height:1px;background:#ffffff;"></div>
<div style="left:552px;top:519px;width:1004px;height:313px;border-top:2px solid #a0a0a0;border-left:2px solid #a0a0a0;border-right:1px solid #ffffff;border-bottom:1px solid #ffffff;background:#e6e6e6;"></div>
<div style="left:561px;top:808px;width:986px;height:6px;border-right:1px solid #ffffff;border-bottom:1px solid #ffffff;background:#d4d4d4;"></div>
<div style="left:1542px;top:646px;width:5px;height:168px;border-right:1px solid #ffffff;background:#d4d4d4;"></div>
<div style="left:561px;top:527px;width:983px;height:61px;background:#f0f0f0;border-top:2px solid #a0a0a0;border-left:2px solid #a0a0a0;"></div>
<div style="left:562px;top:528px;width:109px;height:59px;border-top:1px solid #ffffff;border-left:1px solid #ffffff;border-right:2px solid #808080;border-bottom:2px solid #808080;background:#f0f0f0;"></div>
<div class="t" style="left:562px;top:568px;width:109px;text-align:center;font-size:13.5px;color:#1a1a1a;">Пред. группа</div>
<svg style="left:609px;top:539px" width="14" height="7" viewBox="0 0 16 8"><defs><linearGradient id="tu609539" x1="0" y1="0" x2="0" y2="1"><stop offset="0" stop-color="#7cc4f4"/><stop offset="1" stop-color="#1a88d8"/></linearGradient></defs><path d="M8 0 L16 8 H0 Z" fill="url(#tu609539)"/></svg><svg style="left:609px;top:547px" width="14" height="8" viewBox="0 0 16 8"><defs><linearGradient id="tu609547" x1="0" y1="0" x2="0" y2="1"><stop offset="0" stop-color="#7cc4f4"/><stop offset="1" stop-color="#1a88d8"/></linearGradient></defs><path d="M8 0 L16 8 H0 Z" fill="url(#tu609547)"/></svg>
<div style="left:671px;top:528px;width:109px;height:59px;border-top:1px solid #ffffff;border-left:1px solid #ffffff;border-right:2px solid #808080;border-bottom:2px solid #808080;background:#f0f0f0;"></div>
<div class="t" style="left:671px;top:568px;width:109px;text-align:center;font-size:13.5px;color:#1a1a1a;">След. группа</div>
<svg style="left:719px;top:539px" width="14" height="8" viewBox="0 0 16 8"><defs><linearGradient id="td719539" x1="0" y1="0" x2="0" y2="1"><stop offset="0" stop-color="#1a88d8"/><stop offset="1" stop-color="#7cc4f4"/></linearGradient></defs><path d="M0 0 H16 L8 8 Z" fill="url(#td719539)"/></svg><svg style="left:719px;top:547px" width="14" height="7" viewBox="0 0 16 8"><defs><linearGradient id="td719547" x1="0" y1="0" x2="0" y2="1"><stop offset="0" stop-color="#1a88d8"/><stop offset="1" stop-color="#7cc4f4"/></linearGradient></defs><path d="M0 0 H16 L8 8 Z" fill="url(#td719547)"/></svg>
<div style="left:780px;top:528px;width:109px;height:59px;border-top:1px solid #ffffff;border-left:1px solid #ffffff;border-right:2px solid #808080;border-bottom:2px solid #808080;background:#f0f0f0;"></div>
<div class="t" style="left:780px;top:549px;width:109px;text-align:center;font-size:13.5px;color:#1a1a1a;">Пред.</div>
<div class="t" style="left:780px;top:568px;width:109px;text-align:center;font-size:13.5px;color:#1a1a1a;">Спортсмен</div>
<svg style="left:825px;top:534px" width="17" height="8" viewBox="0 0 16 8"><defs><linearGradient id="tu825534" x1="0" y1="0" x2="0" y2="1"><stop offset="0" stop-color="#7cc4f4"/><stop offset="1" stop-color="#1a88d8"/></linearGradient></defs><path d="M8 0 L16 8 H0 Z" fill="url(#tu825534)"/></svg>
<div style="left:889px;top:528px;width:109px;height:59px;border-top:1px solid #ffffff;border-left:1px solid #ffffff;border-right:2px solid #808080;border-bottom:2px solid #808080;background:#f0f0f0;"></div>
<div class="t" style="left:889px;top:549px;width:109px;text-align:center;font-size:13.5px;color:#1a1a1a;">След.</div>
<div class="t" style="left:889px;top:568px;width:109px;text-align:center;font-size:13.5px;color:#1a1a1a;">Спортсмен</div>
<svg style="left:935px;top:535px" width="17" height="8" viewBox="0 0 16 8"><defs><linearGradient id="td935535" x1="0" y1="0" x2="0" y2="1"><stop offset="0" stop-color="#1a88d8"/><stop offset="1" stop-color="#7cc4f4"/></linearGradient></defs><path d="M0 0 H16 L8 8 Z" fill="url(#td935535)"/></svg>
<div style="left:998px;top:528px;width:109px;height:59px;border-top:1px solid #ffffff;border-left:1px solid #ffffff;border-right:2px solid #808080;border-bottom:2px solid #808080;background:#f0f0f0;"></div>
<div class="t" style="left:998px;top:568px;width:109px;text-align:center;font-size:13.5px;color:#1a1a1a;">Правила</div>
<svg style="left:1042px;top:537px" width="21" height="19" viewBox="0 0 21 19"><path d="M1 2 C4 1 8 1 10 3 C12 1 16 1 20 2 V17 C16 16 12 16 10 18 C8 16 4 16 1 17 Z" fill="#f4f8fc" stroke="#284878" stroke-width="1.3"/><path d="M10 3 V18" stroke="#284878" stroke-width="1.2"/><path d="M1 17 C4 16 8 16 10 18 C12 16 16 16 20 17 V18.5 H1 Z" fill="#284878"/></svg>
<div style="left:1107px;top:528px;width:109px;height:59px;border-top:1px solid #ffffff;border-left:1px solid #ffffff;border-right:2px solid #808080;border-bottom:2px solid #808080;background:#f0f0f0;"></div>
<div class="t" style="left:1107px;top:568px;width:109px;text-align:center;font-size:13.5px;color:#1a1a1a;">Музыка</div>
<svg style="left:1152px;top:536px" width="18" height="20" viewBox="0 0 18 20"><path d="M5 3 L16 1 V15" stroke="#3a7ad8" stroke-width="1.6" fill="none"/><path d="M5 3 V17" stroke="#3a7ad8" stroke-width="1.6"/><ellipse cx="3.5" cy="17" rx="3" ry="2.3" fill="#3a7ad8"/><ellipse cx="14.5" cy="15" rx="3" ry="2.3" fill="#3a7ad8"/><path d="M5 3 L16 1 V4 L5 6 Z" fill="#3a7ad8"/></svg>
<div style="left:1216px;top:528px;width:109px;height:59px;border-top:1px solid #ffffff;border-left:1px solid #ffffff;border-right:2px solid #808080;border-bottom:2px solid #808080;background:#f0f0f0;"></div>
<div class="t" style="left:1216px;top:549px;width:109px;text-align:center;font-size:13.5px;color:#1a1a1a;">Большой</div>
<div class="t" style="left:1216px;top:568px;width:109px;text-align:center;font-size:13.5px;color:#1a1a1a;">Экран</div>
<svg style="left:1260px;top:528px" width="22" height="18" viewBox="0 0 22 18"><rect x="1" y="0" width="20" height="13" fill="#1a3a70"/><rect x="2.5" y="1" width="17" height="10" fill="#3aa0f0"/><rect x="2.5" y="1" width="17" height="4" fill="#80c8f8"/><rect x="9" y="13" width="4" height="3" fill="#404040"/><rect x="5" y="16" width="12" height="2" fill="#202020"/></svg>
<div style="left:1325px;top:528px;width:109px;height:59px;border-top:1px solid #ffffff;border-left:1px solid #ffffff;border-right:2px solid #808080;border-bottom:2px solid #808080;background:#f0f0f0;"></div>
<div class="t" style="left:1325px;top:568px;width:109px;text-align:center;font-size:13.5px;color:#1a1a1a;">Оценки в Excel</div>
<svg style="left:1369px;top:537px" width="20" height="20" viewBox="0 0 20 20"><rect x="0.8" y="0.8" width="18.4" height="18.4" fill="#d8f0d0" stroke="#3a8a3a" stroke-width="1.4"/><path d="M4 4 H8 L10 8 L12 4 H16 L12 10 L16 16 H12 L10 12 L8 16 H4 L8 10 Z" fill="#2a8a2a"/></svg>
<div style="left:1434px;top:528px;width:109px;height:59px;border-top:1px solid #ffffff;border-left:1px solid #ffffff;border-right:2px solid #808080;border-bottom:2px solid #808080;background:#f0f0f0;"></div>
<div class="t" style="left:1434px;top:549px;width:109px;text-align:center;font-size:13.5px;color:#1a1a1a;">Удалить</div>
<div class="t" style="left:1434px;top:568px;width:109px;text-align:center;font-size:13.5px;color:#1a1a1a;">оценки</div>
<svg style="left:1481px;top:531px" width="16" height="15" viewBox="0 0 16 15"><path d="M2 1 L14 14 M14 1 L2 14" stroke="#d02828" stroke-width="3"/></svg>
<div style="left:561px;top:597px;width:983px;height:42px;background:#f0f0f0;border-top:2px solid #a0a0a0;border-left:2px solid #a0a0a0;border-bottom:1px solid #ffffff;border-right:1px solid #ffffff;"></div>
<div class="t" style="left:567px;top:599px;width:983px;text-align:center;font-size:15.2px;font-weight:bold;color:#000080;letter-spacing:0.05px;">Брунова Нелли, Щурова Валентина, Голышев Олег, г.Москва, СО «Спартак», тренер: Савельева Л.И.</div>
<div class="t" style="left:567px;top:619px;width:983px;text-align:center;font-size:15.2px;font-weight:bold;color:#000080;letter-spacing:0.31px;">Дата: 19.08.2022, 11:50-12:25 Группа: Ката-Группа 14-15 лет (11)</div>
<div style="left:561px;top:647px;width:983px;height:163px;background:#717171;"></div>
<div style="left:563px;top:649px;width:108px;height:39px;background:#c8c8c8;"></div>
<div class="t" style="left:566px;top:657.5px;font-size:15.5px;font-weight:bold;color:#10107a;letter-spacing:0.6px;transform:scaleX(1.1);transform-origin:0 0;">Этап\Судья</div>
<div style="left:673px;top:649px;width:108px;height:39px;background:#c8c8c8;"><div class="t" style="left:0px;top:-2px;width:108px;height:39px;line-height:39px;text-align:center;font-size:24px;font-weight:400;color:#10107a;letter-spacing:0.5px;">Рефери</div></div>
<div style="left:783px;top:649px;width:107px;height:39px;background:#c8c8c8;"><div class="t" style="left:0px;top:-2px;width:107px;height:39px;line-height:39px;text-align:center;font-size:24px;font-weight:400;color:#10107a;letter-spacing:0.5px;">1</div></div>
<div style="left:892px;top:649px;width:108px;height:39px;background:#c8c8c8;"><div class="t" style="left:0px;top:-2px;width:108px;height:39px;line-height:39px;text-align:center;font-size:24px;font-weight:400;color:#10107a;letter-spacing:0.5px;">2</div></div>
<div style="left:1002px;top:649px;width:107px;height:39px;background:#c8c8c8;"><div class="t" style="left:0px;top:-2px;width:107px;height:39px;line-height:39px;text-align:center;font-size:24px;font-weight:400;color:#10107a;letter-spacing:0.5px;">3</div></div>
<div style="left:1111px;top:649px;width:107px;height:39px;background:#c8c8c8;"><div class="t" style="left:0px;top:-2px;width:107px;height:39px;line-height:39px;text-align:center;font-size:24px;font-weight:400;color:#10107a;letter-spacing:0.5px;">4</div></div>
<div style="left:1220px;top:649px;width:89px;height:39px;background:#c8c8c8;"><div class="t" style="left:0px;top:-2px;width:89px;height:39px;line-height:39px;text-align:center;font-size:24px;font-weight:400;color:#10107a;letter-spacing:0.5px;">Итого</div></div>
<div style="left:1311px;top:649px;width:90px;height:39px;background:#c8c8c8;"><div class="t" style="left:0px;top:-2px;width:90px;height:39px;line-height:39px;text-align:center;font-size:24px;font-weight:400;color:#10107a;letter-spacing:0.5px;">Всего</div></div>
<div style="left:1403px;top:649px;width:90px;height:39px;background:#c8c8c8;"><div class="t" style="left:0px;top:-2px;width:90px;height:39px;line-height:39px;text-align:center;font-size:24px;font-weight:400;color:#10107a;letter-spacing:0.5px;">Место</div></div>
<div style="left:1495px;top:649px;width:47px;height:39px;background:#c8c8c8;"></div>
<svg style="left:1506px;top:657px" width="20" height="22" viewBox="0 0 20 22"><path d="M2 6 L11 21.5" stroke="#5a5a5a" stroke-width="1.8" stroke-linecap="round"/><path d="M3.5 4.5 C5 2 8 1.5 10 3.5 C12 1 15 0.5 17 2.5 L19 8 C17 10.5 14 11 12.5 9.5 C11 12 8 12.5 6.5 11 Z" fill="#ee2424"/><path d="M5 4.5 C6.5 3 8.5 3 9.5 4.5 L10.5 8 C9 9 7.5 9 6.5 8 Z" fill="#ff7070"/><path d="M12 3 C13.5 2 15 2 16 3 L17 6.5 C16 7.5 14.5 7.5 13.5 6.5 Z" fill="#ff9090"/></svg>
<div style="left:563px;top:690px;width:108px;height:38px;background:#ffc088;"><div class="t" style="left:9px;top:-1px;width:99px;height:38px;line-height:38px;text-align:left;font-size:23.5px;font-weight:400;color:#101050;letter-spacing:0.4px;">1-й круг</div></div>
<div style="left:673px;top:690px;width:108px;height:38px;background:#ffe0c4;"><div class="t" style="left:0px;top:-1px;width:108px;height:38px;line-height:38px;text-align:center;font-size:24px;font-weight:400;color:#787878;letter-spacing:0.5px;">5.0</div></div>
<div style="left:783px;top:690px;width:107px;height:38px;background:#ffe0c4;"><div class="t" style="left:0px;top:-1px;width:107px;height:38px;line-height:38px;text-align:center;font-size:24px;font-weight:400;color:#000;letter-spacing:0.5px;">6.0</div></div>
<div style="left:892px;top:690px;width:108px;height:38px;background:#ffe0c4;"><div class="t" style="left:0px;top:-1px;width:108px;height:38px;line-height:38px;text-align:center;font-size:24px;font-weight:400;color:#000;letter-spacing:0.5px;">7.0</div></div>
<div style="left:1002px;top:690px;width:107px;height:38px;background:#ffe0c4;"><div class="t" style="left:0px;top:-1px;width:107px;height:38px;line-height:38px;text-align:center;font-size:24px;font-weight:400;color:#000;letter-spacing:0.5px;">7.0</div></div>
<div style="left:1111px;top:690px;width:107px;height:38px;background:#ffe0c4;"><div class="t" style="left:0px;top:-1px;width:107px;height:38px;line-height:38px;text-align:center;font-size:24px;font-weight:400;color:#787878;letter-spacing:0.5px;">8.0</div></div>
<div style="left:1220px;top:690px;width:89px;height:38px;background:#ffc088;"><div class="t" style="left:0px;top:-1px;width:89px;height:38px;line-height:38px;text-align:center;font-size:24px;font-weight:400;color:#000;letter-spacing:0.5px;">20,0</div></div>
<div style="left:563px;top:730px;width:108px;height:38px;background:#ffff00;"><div class="t" style="left:9px;top:-1px;width:99px;height:38px;line-height:38px;text-align:left;font-size:23.5px;font-weight:400;color:#000;letter-spacing:0.4px;">2-й круг</div></div>
<div style="left:673px;top:730px;width:108px;height:38px;background:#ffff80;"><div class="t" style="left:0px;top:-1px;width:108px;height:38px;line-height:38px;text-align:center;font-size:24px;font-weight:400;color:#000;letter-spacing:0.5px;">5.0</div></div>
<div style="left:783px;top:730px;width:107px;height:38px;background:#ffff80;"><div class="t" style="left:0px;top:-1px;width:107px;height:38px;line-height:38px;text-align:center;font-size:24px;font-weight:400;color:#787878;letter-spacing:0.5px;">5.0</div></div>
<div style="left:892px;top:730px;width:108px;height:38px;background:#ffff80;"><div class="t" style="left:0px;top:-1px;width:108px;height:38px;line-height:38px;text-align:center;font-size:24px;font-weight:400;color:#000;letter-spacing:0.5px;">6.5</div></div>
<div style="left:1002px;top:730px;width:107px;height:38px;background:#ffff80;"><div class="t" style="left:0px;top:-1px;width:107px;height:38px;line-height:38px;text-align:center;font-size:24px;font-weight:400;color:#787878;letter-spacing:0.5px;">6.6</div></div>
<div style="left:1111px;top:730px;width:107px;height:38px;background:#ffff80;"><div class="t" style="left:0px;top:-1px;width:107px;height:38px;line-height:38px;text-align:center;font-size:24px;font-weight:400;color:#000;letter-spacing:0.5px;">5.8</div></div>
<div style="left:1220px;top:730px;width:89px;height:38px;background:#ffff00;"><div class="t" style="left:0px;top:-1px;width:89px;height:38px;line-height:38px;text-align:center;font-size:24px;font-weight:400;color:#000;letter-spacing:0.5px;">17,3</div></div>
<div style="left:1311px;top:690px;width:90px;height:78px;background:#80ffff;"><div class="t" style="left:0px;top:-6px;width:90px;height:78px;line-height:78px;text-align:center;font-size:24px;font-weight:400;color:#000;letter-spacing:0.5px;">37,3</div></div>
<div style="left:1403px;top:690px;width:90px;height:78px;background:#80ffff;"><div class="t" style="left:0px;top:-6px;width:90px;height:78px;line-height:78px;text-align:center;font-size:24px;font-weight:400;color:#000;letter-spacing:0.5px;">5</div></div>
<div style="left:1495px;top:690px;width:47px;height:78px;background:#c8c8c8;"></div>
<div style="left:563px;top:770px;width:108px;height:38px;background:#00ff00;"><div class="t" style="left:9px;top:-1px;width:99px;height:38px;line-height:38px;text-align:left;font-size:23.5px;font-weight:400;color:#10107a;letter-spacing:0.4px;">Финал</div></div>
<div style="left:673px;top:770px;width:108px;height:38px;background:#80ff80;"><div class="t" style="left:0px;top:-1px;width:108px;height:38px;line-height:38px;text-align:center;font-size:24px;font-weight:400;color:#000;letter-spacing:0.5px;">6.6</div></div>
<div style="left:783px;top:770px;width:107px;height:38px;background:#80ff80;"><div class="t" style="left:0px;top:-1px;width:107px;height:38px;line-height:38px;text-align:center;font-size:24px;font-weight:400;color:#000;letter-spacing:0.5px;">6.7</div></div>
<div style="left:892px;top:770px;width:108px;height:38px;background:#80ff80;"><div class="t" style="left:0px;top:-1px;width:108px;height:38px;line-height:38px;text-align:center;font-size:24px;font-weight:400;color:#787878;letter-spacing:0.5px;">5.8</div></div>
<div style="left:1002px;top:770px;width:107px;height:38px;background:#80ff80;"><div class="t" style="left:0px;top:-1px;width:107px;height:38px;line-height:38px;text-align:center;font-size:24px;font-weight:400;color:#787878;letter-spacing:0.5px;">6.7</div></div>
<div style="left:1111px;top:770px;width:107px;height:38px;background:#80ff80;"><div class="t" style="left:0px;top:-1px;width:107px;height:38px;line-height:38px;text-align:center;font-size:24px;font-weight:400;color:#000;letter-spacing:0.5px;">6.6</div></div>
<div style="left:1220px;top:770px;width:181px;height:38px;background:#00ff00;"><div class="t" style="left:0px;top:-1px;width:181px;height:38px;line-height:38px;text-align:center;font-size:24px;font-weight:400;color:#000;letter-spacing:0.5px;">19,9</div></div>
<div style="left:1403px;top:770px;width:90px;height:38px;background:#00ff00;"><div class="t" style="left:0px;top:-1px;width:90px;height:38px;line-height:38px;text-align:center;font-size:24px;font-weight:400;color:#000;letter-spacing:0.5px;">3</div></div>
<div style="left:1495px;top:770px;width:47px;height:38px;background:#c8c8c8;"></div>
<div style="left:563px;top:688px;width:657px;height:43px;border:4px solid #0000ff;"></div>
<div style="left:1504px;top:717px;width:27px;height:26px;background:#f0f0f0;border-top:2px solid #ffffff;border-left:2px solid #ffffff;border-right:2px solid #8a8a8a;border-bottom:2px solid #8a8a8a;"><svg style="left:3px;top:3px" width="21" height="19" viewBox="0 0 21 19"><path d="M1 15 C4 11 8 8 12 6 L16 3.5 L18.5 6 L18.5 9 L19.5 11 L19.5 15 L17 17.5 L13.5 17 L12.5 13 L12 10 C9 10 5 12 1 15 Z" fill="#2a2a2a"/><ellipse cx="15.5" cy="9" rx="2.6" ry="1.8" fill="#a0a0a0"/><ellipse cx="16" cy="14.5" rx="2.6" ry="1.8" fill="#b8b8b8"/></svg></div>
<div style="left:1504px;top:777px;width:27px;height:26px;background:#f0f0f0;border-top:2px solid #ffffff;border-left:2px solid #ffffff;border-right:2px solid #8a8a8a;border-bottom:2px solid #8a8a8a;"><svg style="left:3px;top:3px" width="21" height="19" viewBox="0 0 21 19"><path d="M1 15 C4 11 8 8 12 6 L16 3.5 L18.5 6 L18.5 9 L19.5 11 L19.5 15 L17 17.5 L13.5 17 L12.5 13 L12 10 C9 10 5 12 1 15 Z" fill="#2a2a2a"/><ellipse cx="15.5" cy="9" rx="2.6" ry="1.8" fill="#a0a0a0"/><ellipse cx="16" cy="14.5" rx="2.6" ry="1.8" fill="#b8b8b8"/></svg></div>
</body></html>
